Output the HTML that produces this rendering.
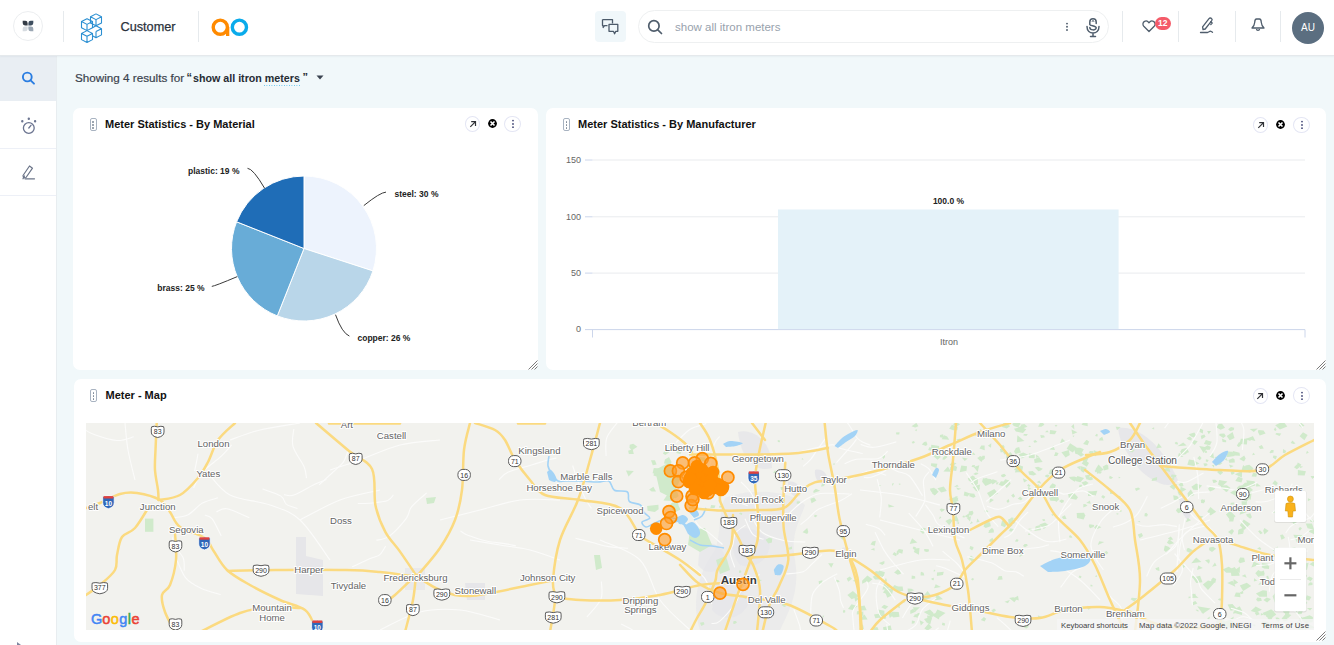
<!DOCTYPE html>
<html><head><meta charset="utf-8">
<style>
*{box-sizing:border-box;margin:0;padding:0}
html,body{width:1334px;height:645px;overflow:hidden;background:#f1f8fa;font-family:"Liberation Sans",sans-serif}
.abs{position:absolute}
#hdr{left:0;top:0;width:1334px;height:55px;background:#fff;z-index:2}
.vd{position:absolute;width:1px;background:#e6eaed}
#side{left:0;top:55px;width:57px;height:590px;background:#fff;border-right:1px solid #e8edf0}
#hline{left:0;top:55px;width:1334px;height:1px;background:#e5e9ec;box-shadow:0 1px 1.5px rgba(40,60,80,0.06);z-index:3}
.card{position:absolute;background:#fff;border-radius:7px}
.ttl{position:absolute;font-weight:700;font-size:11px;color:#111;white-space:nowrap;line-height:13px}
.drag{position:absolute;width:7px;height:13px;border:1.2px solid #a8b3c1;border-radius:2px}
.drag i{position:absolute;left:1.7px;width:1.8px;height:1.8px;background:#7d8896;border-radius:1px}
.btnc{position:absolute;width:16px;height:16px;border:1px solid #e4e6f4;border-radius:50%}
</style></head>
<body>
<!-- HEADER -->
<div id="hdr" class="abs">
  <div class="abs" style="left:13px;top:11px;width:30px;height:30px;border:1.3px solid #eceef0;border-radius:50%"></div>
  <svg class="abs" style="left:22px;top:20px" width="12" height="12" viewBox="0 0 12 12">
    <path d="M0.7 0.7 H3.3 Q5.6 0.7 5.6 3 V5.4 H3 Q0.7 5.4 0.7 3.1 Z" fill="#343b45"/>
    <path d="M11.3 0.7 H8.7 Q6.4 0.7 6.4 3 V5.4 H9 Q11.3 5.4 11.3 3.1 Z" fill="#3f4f60"/>
    <path d="M0.7 11.3 H3.3 Q5.6 11.3 5.6 9 V6.4 H3 Q0.7 6.4 0.7 8.7 Z" fill="#d6dbe0"/>
    <path d="M11.3 11.3 H8.7 Q6.4 11.3 6.4 9 V6.4 H9 Q11.3 6.4 11.3 8.7 Z" fill="#9aa6b3"/>
  </svg>
  <div class="vd" style="left:63px;top:11px;height:31px"></div>
  <svg class="abs" style="left:79px;top:12px" width="25" height="30.5" preserveAspectRatio="none" viewBox="0 0 25 32" fill="none" stroke="#2b8fd2" stroke-width="1.1" stroke-linejoin="round">
    <!-- TR cube -->
    <path d="M17 2 L22.5 5 L22.5 11.5 L17 14.5 L11.5 11.5 L11.5 5 Z M11.5 5 L17 8 L22.5 5 M17 8 L17 14.5"/>
    <!-- L cube -->
    <path d="M8 7 L13.5 10 L13.5 16.5 L8 19.5 L2.5 16.5 L2.5 10 Z M2.5 10 L8 13 L13.5 10 M8 13 L8 19.5"/>
    <!-- BR cube -->
    <path d="M17 14.5 L22.5 17.5 L22.5 24 L17 27 L13.5 25 M17 20.5 L17 27 M13.5 16.5 L17 14.5 M17 20.5 L22.5 17.5"/>
    <!-- BL cube -->
    <path d="M8 19.5 L13.5 22.5 L13.5 29 L8 32 L2.5 29 L2.5 22.5 Z M2.5 22.5 L8 25.5 L13.5 22.5 M8 25.5 L8 31.5"/>
  </svg>
  <div class="abs" style="left:120.5px;top:19px;font-size:12.7px;line-height:16px;color:#2b323c;-webkit-text-stroke:0.25px #2b323c">Customer</div>
  <div class="vd" style="left:198px;top:11px;height:31px"></div>
  <svg class="abs" style="left:210px;top:17px" width="40" height="21" viewBox="0 0 40 21">
    <circle cx="10.3" cy="10.2" r="7.1" fill="none" stroke="#ff8a00" stroke-width="3.4"/>
    <rect x="16" y="10" width="3.3" height="9" fill="#ff8a00"/>
    <circle cx="29.4" cy="10.2" r="7.1" fill="none" stroke="#0aabeb" stroke-width="3.4"/>
  </svg>

  <!-- chat btn -->
  <div class="abs" style="left:595px;top:11px;width:31px;height:31px;background:#f0f7fa;border-radius:4px"></div>
  <svg class="abs" style="left:600px;top:17px" width="20" height="20" viewBox="0 0 20 20" fill="none" stroke="#4c5a6a" stroke-width="1.3" stroke-linejoin="round">
    <path d="M2.5 2.6 H12.5 V6.5 M7.5 8.6 H4.5 L3.2 10.5 V8.6 H2.5 V2.6"/>
    <path d="M9 7.4 H17.8 V14.3 H15.8 L14.6 16.8 L13.4 14.3 H9 Z"/>
  </svg>
  <!-- search pill -->
  <div class="abs" style="left:637.5px;top:9.8px;width:471.5px;height:33.2px;border:1.5px solid #eef0f1;border-radius:17px"></div>
  <svg class="abs" style="left:645px;top:17px" width="20" height="20" viewBox="0 0 20 20" fill="none" stroke="#4f5d6c" stroke-width="1.7">
    <circle cx="8.9" cy="8.9" r="5.2"/><path d="M12.8 12.8 L16.5 16.5" stroke-linecap="round"/>
  </svg>
  <div class="abs" style="left:675px;top:20px;font-size:11.5px;line-height:14px;color:#98a2ad">show all itron meters</div>
  <svg class="abs" style="left:1064px;top:21px" width="6" height="12" viewBox="0 0 6 12" fill="#4f5d6c">
    <circle cx="3" cy="2.6" r="0.95"/><circle cx="3" cy="5.8" r="0.95"/><circle cx="3" cy="9" r="0.95"/>
  </svg>
  <svg class="abs" style="left:1084px;top:16px" width="18" height="22" viewBox="0 0 18 22" fill="none" stroke="#4f5d6c" stroke-width="1.5" stroke-linecap="round">
    <path d="M5.8 8.5 V6 A3.2 3.2 0 0 1 12.2 6 V7.5 M5.8 8.5 C5.8 10 12.2 9.6 12.2 11.8 C12.2 14.6 5.8 14.6 5.8 11.6"/>
    <path d="M8.2 5.5 L9 4.3 L9.8 5.5" stroke-width="1"/>
    <path d="M3 10.5 C3 15 6 17 9 17 C12 17 15 15 15 10.5 M9 17 V20 M6.5 20.5 H11.5"/>
  </svg>
  <div class="vd" style="left:1122px;top:11px;height:31px"></div>
  <!-- heart -->
  <svg class="abs" style="left:1142px;top:19px" width="14" height="14" viewBox="0 0 14 14" fill="none" stroke="#4f5d6c" stroke-width="1.3" stroke-linejoin="round">
    <path d="M7 12.5 L1.8 7.3 C0.4 5.8 0.7 3.2 2.6 2.3 C4.3 1.5 6 2.3 7 3.8 C8 2.3 9.7 1.5 11.4 2.3 C13.3 3.2 13.6 5.8 12.2 7.3 Z"/>
  </svg>
  <div class="abs" style="left:1154.5px;top:17px;width:16.5px;height:13px;background:#f45b69;border-radius:7px;color:#fff;font-size:8.5px;font-weight:700;line-height:13px;text-align:center">12</div>
  <div class="vd" style="left:1178px;top:11px;height:31px"></div>
  <!-- pen -->
  <svg class="abs" style="left:1199px;top:16px" width="17" height="19" viewBox="0 0 17 19" fill="none" stroke="#4f5d6c" stroke-width="1.3" stroke-linejoin="round" stroke-linecap="round">
    <path d="M4 13.5 L3.6 10.8 L10 2.6 C10.7 1.8 11.8 1.8 12.5 2.5 C13.2 3.1 13.2 4.2 12.6 4.9 L6.2 13 Z"/>
    <path d="M11.8 5.7 L13.2 7 L11.8 8.5"/>
    <path d="M1.5 16.5 H8.5 C9.5 16.5 10.5 15.2 11.3 15.2 C12 15.2 12.8 16 13.5 16.3"/>
  </svg>
  <div class="vd" style="left:1235px;top:11px;height:31px"></div>
  <!-- bell -->
  <svg class="abs" style="left:1250px;top:17px" width="16" height="16" viewBox="0 0 16 16" fill="none" stroke="#4f5d6c" stroke-width="1.3" stroke-linejoin="round">
    <path d="M2 11 C3.5 9.5 4.5 8.5 4.7 5.5 C4.8 3 5.2 2 6.5 2 H9.5 C10.8 2 11.2 3 11.3 5.5 C11.5 8.5 12.5 9.5 14 11 Z"/>
    <path d="M6.5 12 C6.5 13.8 9.5 13.8 9.5 12"/>
  </svg>
  <div class="vd" style="left:1280px;top:11px;height:31px"></div>
  <div class="abs" style="left:1292px;top:11.5px;width:32px;height:32px;background:#5b6e80;border-radius:50%;color:#fff;font-size:10px;line-height:31px;text-align:center">AU</div>
</div>

<div id="hline" class="abs"></div>
<!-- SIDEBAR -->
<div id="side" class="abs">
  <div class="abs" style="left:0;top:0;width:56px;height:46px;background:#e9eef3"></div>
  <svg class="abs" style="left:19px;top:68px;top:13px" width="20" height="20" viewBox="0 0 20 20" fill="none" stroke="#2a7de1" stroke-width="1.9" stroke-linecap="round">
    <circle cx="8.3" cy="9" r="4.4"/><path d="M11.6 12.3 L15 15.7"/>
  </svg>
  <div class="abs" style="left:0;top:93px;width:56px;height:1px;background:#edf0f7"></div>
  <div class="abs" style="left:0;top:140px;width:56px;height:1px;background:#edf0f7"></div>
  <svg class="abs" style="left:19px;top:62px" width="20" height="20" viewBox="0 0 20 20" fill="none" stroke="#6b7490" stroke-width="1.3" stroke-linecap="round">
    <circle cx="9.8" cy="11" r="5.4"/><path d="M9.8 11 L12 8.3"/>
    <circle cx="3.3" cy="4.3" r="0.55" fill="#6b7490"/><circle cx="9.8" cy="1.8" r="0.55" fill="#6b7490"/><circle cx="16.1" cy="4.3" r="0.55" fill="#6b7490"/>
  </svg>
  <svg class="abs" style="left:19px;top:108px" width="20" height="20" viewBox="0 0 20 20" fill="none" stroke="#6b7488" stroke-width="1.2" stroke-linejoin="round" stroke-linecap="round">
    <path d="M4 12.5 L10.5 3 L13.5 5.2 L7 14.5 L4.5 15 Z M5.5 13 L4 15.8"/>
    <path d="M6 15.8 H15.5"/>
  </svg>
</div>

<!-- RESULT LINE -->
<div class="abs" style="left:75px;top:71px;font-size:11.7px;line-height:13px;color:#3b434d;white-space:nowrap;-webkit-text-stroke:0.2px #3b434d">Showing 4 results for</div>
<div class="abs" style="left:186.5px;top:71px;font-size:11px;line-height:13px;color:#262c33;font-weight:700">“</div>
<div class="abs" style="left:193px;top:71.5px;font-size:10.7px;line-height:13px;color:#262c33;font-weight:700;white-space:nowrap">show all itron meters</div>
<div class="abs" style="left:264px;top:84.5px;width:37px;height:1.5px;background-image:linear-gradient(90deg,#62c4ee 50%,transparent 50%);background-size:2.5px 1.5px"></div>
<div class="abs" style="left:302.5px;top:71px;font-size:11px;line-height:13px;color:#262c33;font-weight:700">”</div>
<svg class="abs" style="left:316px;top:75px" width="8" height="5" viewBox="0 0 8 5"><path d="M0.5 0.5 H7.5 L4 4.5Z" fill="#3b4350"/></svg>

<!-- CARD 1 -->
<div class="card" style="left:73px;top:108px;width:465px;height:262px"></div>
<!-- CARD 2 -->
<div class="card" style="left:546px;top:108px;width:780px;height:262px"></div>
<!-- CARD 3 -->
<div class="card" style="left:73.7px;top:379px;width:1252.3px;height:262.5px"></div>


<!-- CARD1 CONTENT -->
<div class="drag" style="left:89.5px;top:118px"><i style="top:2.2px"></i><i style="top:5.2px"></i><i style="top:8.2px"></i></div>
<div class="ttl" style="left:105px;top:117.7px">Meter Statistics - By Material</div>

<div class="btnc" style="left:464.8px;top:115.9px;width:15.6px;height:16px"></div>
<svg class="abs" style="left:467.6px;top:118.9px" width="10" height="10" viewBox="0 0 10 10" fill="none" stroke="#2f3136" stroke-width="1.2"><path d="M2.3 7.8 L7.5 2.6 M3.2 2.6 H7.5 V6.9"/></svg>
<svg class="abs" style="left:488.2px;top:118.9px" width="9" height="9" viewBox="0 0 9 9"><circle cx="4.5" cy="4.5" r="4.4" fill="#000"/><path d="M2.5 2.5 L6.5 6.5 M6.5 2.5 L2.5 6.5" stroke="#fff" stroke-width="1.6"/></svg>
<div class="btnc" style="left:504.4px;top:115.7px;width:17px;height:16.5px"></div>
<svg class="abs" style="left:511.2px;top:117.9px" width="4" height="12" viewBox="0 0 4 12" fill="#454a78"><circle cx="2" cy="2.6" r="0.9"/><circle cx="2" cy="6" r="0.9"/><circle cx="2" cy="9.2" r="0.9"/></svg>
<svg class="abs" style="left:0;top:0" width="540" height="372" viewBox="0 0 540 372">
<path d="M304 248.5 L304.00 176.00 A72.5 72.5 0 0 1 372.95 270.90 Z" fill="#edf3fd" stroke="#fff" stroke-width="1"/>
<path d="M304 248.5 L372.95 270.90 A72.5 72.5 0 0 1 277.31 315.91 Z" fill="#b9d6e9" stroke="#fff" stroke-width="1"/>
<path d="M304 248.5 L277.31 315.91 A72.5 72.5 0 0 1 236.59 221.81 Z" fill="#68acd7" stroke="#fff" stroke-width="1"/>
<path d="M304 248.5 L236.59 221.81 A72.5 72.5 0 0 1 304.00 176.00 Z" fill="#1f6db7" stroke="#fff" stroke-width="1"/>
<g fill="none" stroke="#3a3a3a" stroke-width="1">
<path d="M247.5 168.3 Q253 168.5 264.7 188.4"/>
<path d="M386 192.1 Q380 192.5 363.8 205.6"/>
<path d="M211.8 286.4 Q215 286 237.3 276.6"/>
<path d="M335.5 314.7 Q342 333 349.4 336.1"/>
</g>
<g font-family="Liberation Sans" font-weight="700" font-size="8.5" fill="#222">
<text x="188" y="173.7">plastic: 19 %</text>
<text x="394.5" y="196.5">steel: 30 %</text>
<text x="157.3" y="290.9">brass: 25 %</text>
<text x="357.5" y="340.6">copper: 26 %</text>
</g>
</svg>
<svg class="abs" style="left:528px;top:360px" width="10" height="10" viewBox="0 0 10 10" stroke="#7a7a7a" stroke-width="1" stroke-linecap="round"><path d="M0.8 9.2 L9.2 0.8 M3.8 9.2 L9.2 3.8 M6.8 9.2 L9.2 6.8"/></svg>

<!-- CARD2 CONTENT -->
<div class="drag" style="left:563px;top:118.3px"><i style="top:2.2px"></i><i style="top:5.2px"></i><i style="top:8.2px"></i></div>
<div class="ttl" style="left:578px;top:118.2px">Meter Statistics - By Manufacturer</div>

<div class="btnc" style="left:1252.8px;top:116.8px;width:15.6px;height:16px"></div>
<svg class="abs" style="left:1255.6px;top:119.8px" width="10" height="10" viewBox="0 0 10 10" fill="none" stroke="#2f3136" stroke-width="1.2"><path d="M2.3 7.8 L7.5 2.6 M3.2 2.6 H7.5 V6.9"/></svg>
<svg class="abs" style="left:1276.2px;top:119.8px" width="9" height="9" viewBox="0 0 9 9"><circle cx="4.5" cy="4.5" r="4.4" fill="#000"/><path d="M2.5 2.5 L6.5 6.5 M6.5 2.5 L2.5 6.5" stroke="#fff" stroke-width="1.6"/></svg>
<div class="btnc" style="left:1293.2px;top:116.6px;width:17px;height:16.5px"></div>
<svg class="abs" style="left:1300.0px;top:118.8px" width="4" height="12" viewBox="0 0 4 12" fill="#454a78"><circle cx="2" cy="2.6" r="0.9"/><circle cx="2" cy="6" r="0.9"/><circle cx="2" cy="9.2" r="0.9"/></svg>
<svg class="abs" style="left:546px;top:108px" width="780" height="262" viewBox="546 108 780 262">
<g stroke="#e9ebee" stroke-width="1">
<path d="M592.5 160 H1305 M592.5 216.8 H1305 M592.5 273.1 H1305"/>
</g>
<g stroke="#ccd6eb" stroke-width="1">
<path d="M585 160 H592.5 M585 216.8 H592.5 M585 273.1 H592.5 M585 329.6 H1305 M592.5 329.6 V337.5 M1305 329.6 V337.5"/>
</g>
<rect x="778" y="209.5" width="340.6" height="119.6" fill="#e4f2f9"/>
<g font-family="Liberation Sans" font-size="9" fill="#666" text-anchor="end">
<text x="581" y="163">150</text>
<text x="581" y="219.6">100</text>
<text x="581" y="276">50</text>
<text x="581" y="332.4">0</text>
</g>
<text x="948.5" y="203.7" font-family="Liberation Sans" font-size="8.5" font-weight="700" fill="#222" text-anchor="middle">100.0 %</text>
<text x="949" y="344.8" font-family="Liberation Sans" font-size="9" fill="#666" text-anchor="middle">Itron</text>
</svg>
<svg class="abs" style="left:1316px;top:360px" width="10" height="10" viewBox="0 0 10 10" stroke="#7a7a7a" stroke-width="1" stroke-linecap="round"><path d="M0.8 9.2 L9.2 0.8 M3.8 9.2 L9.2 3.8 M6.8 9.2 L9.2 6.8"/></svg>

<!-- CARD3 CONTENT -->
<div class="drag" style="left:90px;top:388.6px"><i style="top:2.2px"></i><i style="top:5.2px"></i><i style="top:8.2px"></i></div>
<div class="ttl" style="left:105.5px;top:388.8px">Meter - Map</div>

<div class="btnc" style="left:1252.6px;top:387.6px;width:15.6px;height:16px"></div>
<svg class="abs" style="left:1255.4px;top:390.6px" width="10" height="10" viewBox="0 0 10 10" fill="none" stroke="#2f3136" stroke-width="1.2"><path d="M2.3 7.8 L7.5 2.6 M3.2 2.6 H7.5 V6.9"/></svg>
<svg class="abs" style="left:1276.0px;top:390.6px" width="9" height="9" viewBox="0 0 9 9"><circle cx="4.5" cy="4.5" r="4.4" fill="#000"/><path d="M2.5 2.5 L6.5 6.5 M6.5 2.5 L2.5 6.5" stroke="#fff" stroke-width="1.6"/></svg>
<div class="btnc" style="left:1293.0px;top:387.4px;width:17px;height:16.5px"></div>
<svg class="abs" style="left:1299.8px;top:389.6px" width="4" height="12" viewBox="0 0 4 12" fill="#454a78"><circle cx="2" cy="2.6" r="0.9"/><circle cx="2" cy="6" r="0.9"/><circle cx="2" cy="9.2" r="0.9"/></svg>
<svg class="abs" style="left:1316px;top:631px" width="10" height="10" viewBox="0 0 10 10" stroke="#7a7a7a" stroke-width="1" stroke-linecap="round"><path d="M0.8 9.2 L9.2 0.8 M3.8 9.2 L9.2 3.8 M6.8 9.2 L9.2 6.8"/></svg>
<div id="map" class="abs" style="left:86px;top:423px;width:1228px;height:207px;background:#f2f2ee;overflow:hidden">
<svg class="abs" style="left:0;top:0" width="1228" height="207" viewBox="86 423 1228 207">
<style>.lb{font-family:"Liberation Sans";font-size:9.6px;fill:#646464;text-anchor:middle;paint-order:stroke;stroke:#fff;stroke-width:2px;stroke-linejoin:round}.sh{font-family:"Liberation Sans";font-size:7px;fill:#333;text-anchor:middle}.shi{font-family:"Liberation Sans";font-size:6.5px;fill:#fff;text-anchor:middle;font-weight:700}</style>
<rect x="86" y="423" width="1228" height="207" fill="#f2f2ee"/>
<g fill="#e6e6e9">
<path d="M296 537 L306 537 L306 556 L323 560 L323 596 L296 594 Z"/>
<path d="M725 498 C750 488 790 490 805 505 C800 520 790 535 795 560 C800 590 790 610 780 630 L700 630 C690 600 700 570 715 550 C722 530 718 512 725 498Z" opacity="0.6"/>
<path d="M735 530 C745 525 765 530 770 545 C768 560 755 570 740 565 C732 555 730 540 735 530Z" opacity="0.7"/>
<path d="M715 585 C728 580 745 588 748 605 C740 620 722 622 712 610Z" opacity="0.7"/>
<path d="M700 545 C710 540 725 545 725 560 C720 575 705 575 698 565Z" opacity="0.7"/>
<path d="M738 432 C750 428 772 438 772 468 C760 472 742 465 738 432Z" opacity="0.85"/>
<path d="M788 482 C795 480 802 486 800 496 C794 498 788 494 788 482Z"/>
<path d="M1118 428 C1135 425 1160 440 1178 480 C1170 492 1150 480 1140 470 C1128 455 1120 445 1118 428Z" opacity="0.9"/>
<path d="M1180 495 C1190 497 1195 510 1188 520 C1182 515 1178 505 1180 495Z"/>
<path d="M465 583 L485 583 L485 600 L467 600Z"/>
<path d="M405 568 L425 568 L425 590 L405 590Z" opacity="0.7"/>
<path d="M815 470 C822 468 830 474 826 484 C818 484 814 478 815 470Z"/>
<path d="M842 548 C850 546 856 552 854 560 C846 561 842 556 842 548Z"/>
</g>
<g fill="#d0eacb">
<path d="M145.0 518.6 L153.4 518.6 L153.4 531.8 L145.0 531.8 Z"/>
<path d="M426.0 498.0 L436.0 497.0 L434.0 503.0 L427.0 504.0 Z"/>
<path d="M594.0 555.0 L600.0 555.0 L602.0 568.0 L596.0 570.0 Z"/>
<path d="M655.0 470.0 L670.0 462.0 L680.0 480.0 L672.0 498.0 L660.0 492.0 Z"/>
<path d="M690.0 530.0 L705.0 528.0 L712.0 545.0 L700.0 552.0 L688.0 545.0 Z"/>
<path d="M716.0 560.0 L726.0 556.0 L730.0 570.0 L720.0 574.0 Z"/>
<path d="M1002.9 483.0 L1005.1 479.2 L1009.5 480.5 L1010.6 483.7 L1006.6 487.9 Z"/>
<path d="M1036.6 485.0 L1038.7 484.2 L1040.4 486.7 L1038.3 488.4 L1034.9 487.5 Z"/>
<path d="M1077.5 477.5 L1074.7 481.7 L1070.4 479.1 L1069.0 476.9 L1074.2 476.5 Z"/>
<path d="M1023.1 435.3 L1024.1 433.9 L1027.8 433.9 L1026.4 436.1 Z"/>
<path d="M941.2 492.6 L937.3 488.2 L943.7 486.4 L946.8 490.9 Z"/>
<path d="M1015.1 496.2 L1013.2 497.8 L1011.2 495.6 L1013.4 493.4 Z"/>
<path d="M1028.8 530.4 L1028.6 528.6 L1031.8 528.8 L1031.5 531.0 Z"/>
<path d="M982.7 430.8 L980.8 432.7 L978.8 430.4 L980.4 429.0 Z"/>
<path d="M984.7 450.3 L979.5 448.6 L981.3 445.6 L984.6 445.6 Z"/>
<path d="M1015.7 453.9 L1014.0 451.5 L1015.9 448.0 L1019.1 447.0 L1020.9 452.5 Z"/>
<path d="M979.6 521.8 L976.4 522.6 L977.4 518.5 Z"/>
<path d="M944.2 435.2 L947.2 436.4 L949.2 439.8 L941.6 439.3 Z"/>
<path d="M931.8 492.4 L930.0 489.6 L936.4 488.7 L937.1 492.9 Z"/>
<path d="M1088.7 457.6 L1085.5 464.2 L1081.9 459.6 Z"/>
<path d="M1031.4 488.7 L1028.1 490.0 L1028.1 486.7 Z"/>
<path d="M1072.4 434.4 L1071.5 429.5 L1077.4 432.3 Z"/>
<path d="M1011.1 517.4 L1016.1 518.6 L1014.6 521.7 L1009.8 520.5 Z"/>
<path d="M967.0 466.2 L966.5 470.8 L959.7 472.2 L961.3 465.4 Z"/>
<path d="M1088.6 452.2 L1090.1 451.0 L1093.7 451.2 L1093.5 454.0 L1091.5 455.0 Z"/>
<path d="M972.5 486.9 L977.5 485.5 L979.9 488.9 L975.1 490.1 Z"/>
<path d="M957.3 430.3 L953.2 430.2 L949.2 428.7 L951.9 424.7 L957.8 426.8 Z"/>
<path d="M931.0 449.2 L931.3 444.7 L939.1 445.9 L939.3 450.2 Z"/>
<path d="M1081.7 463.6 L1084.5 459.6 L1089.0 462.9 L1086.8 466.8 Z"/>
<path d="M1096.1 529.5 L1094.1 527.4 L1096.5 524.8 L1101.4 527.2 Z"/>
<path d="M969.4 518.4 L964.6 516.3 L969.2 513.3 Z"/>
<path d="M1068.1 493.9 L1073.5 492.6 L1078.0 497.3 L1076.2 499.8 L1068.9 498.2 Z"/>
<path d="M1043.9 529.1 L1039.4 524.6 L1045.1 522.4 L1048.5 525.0 Z"/>
<path d="M1018.0 427.4 L1023.7 424.4 L1022.9 432.7 Z"/>
<path d="M978.6 473.0 L977.1 474.5 L975.4 474.9 L973.2 474.0 L975.9 472.4 Z"/>
<path d="M956.5 426.5 L952.9 424.2 L956.6 421.7 L960.0 424.6 Z"/>
<path d="M929.8 488.8 L934.0 487.7 L938.7 491.8 L934.3 495.5 Z"/>
<path d="M1038.5 458.3 L1038.2 461.1 L1035.0 460.7 L1034.8 459.2 Z"/>
<path d="M1004.8 527.2 L1000.8 525.5 L1002.1 520.4 L1007.8 522.3 Z"/>
<path d="M1039.0 457.0 L1042.7 462.1 L1034.7 463.0 L1034.0 459.5 Z"/>
<path d="M956.2 439.4 L960.6 438.6 L959.6 442.0 Z"/>
<path d="M991.3 443.2 L991.0 447.7 L987.9 445.8 Z"/>
<path d="M1012.1 423.9 L1017.1 420.1 L1020.5 423.6 L1018.3 427.5 L1013.8 426.0 Z"/>
<path d="M986.1 477.8 L988.4 479.5 L987.2 482.1 L984.1 482.9 L983.8 479.7 Z"/>
<path d="M1088.1 493.3 L1092.2 492.0 L1094.1 494.2 L1090.8 495.9 L1088.0 496.1 Z"/>
<path d="M972.2 465.3 L974.9 464.9 L974.7 467.2 L971.6 467.1 Z"/>
<path d="M943.4 471.6 L947.9 466.6 L951.0 471.8 Z"/>
<path d="M1000.9 475.0 L1004.2 473.8 L1006.2 475.4 L1003.9 477.3 L1001.7 477.1 Z"/>
<path d="M955.1 500.6 L958.8 504.4 L955.7 506.1 L952.4 503.8 Z"/>
<path d="M972.7 482.2 L969.0 481.1 L967.8 478.4 L972.6 475.5 L975.1 476.9 Z"/>
<path d="M950.0 469.9 L950.4 467.3 L953.0 464.6 L957.1 467.0 L956.2 470.9 Z"/>
<path d="M975.0 485.9 L980.1 484.6 L978.8 492.2 L975.3 490.4 Z"/>
<path d="M977.7 472.0 L973.7 466.9 L979.3 465.2 Z"/>
<path d="M1012.8 459.2 L1015.2 459.1 L1014.2 463.3 L1011.3 463.0 L1008.7 460.6 Z"/>
<path d="M989.9 497.5 L987.0 492.9 L994.3 489.1 L998.1 493.4 Z"/>
<path d="M1001.8 486.1 L998.5 484.7 L1001.0 481.2 L1008.1 481.9 L1006.6 485.0 Z"/>
<path d="M989.5 503.1 L989.9 498.0 L993.9 500.1 Z"/>
<path d="M1100.0 473.1 L1097.0 473.8 L1096.5 470.3 L1099.7 470.3 Z"/>
<path d="M957.1 484.7 L958.8 486.6 L954.0 487.1 Z"/>
<path d="M1089.9 491.4 L1097.4 490.8 L1095.6 495.7 Z"/>
<path d="M935.1 494.9 L932.0 493.6 L933.1 491.8 L936.4 491.8 L936.6 493.4 Z"/>
<path d="M1054.4 495.5 L1056.1 496.5 L1056.4 501.1 L1050.4 500.8 L1049.3 498.1 Z"/>
<path d="M950.2 518.4 L952.5 520.8 L949.2 525.2 L945.4 520.9 Z"/>
<path d="M985.0 434.5 L985.1 438.6 L980.0 437.0 L979.8 432.6 Z"/>
<path d="M1033.6 475.4 L1029.3 474.7 L1028.3 471.6 L1032.6 471.1 L1036.5 474.3 Z"/>
<path d="M990.6 478.9 L994.2 482.0 L985.5 486.0 L982.1 481.7 L983.0 478.3 Z"/>
<path d="M1084.0 512.7 L1085.3 515.6 L1083.6 519.5 L1077.0 517.9 L1076.7 513.1 Z"/>
<path d="M978.1 480.8 L974.9 481.5 L972.6 480.6 L974.6 478.4 Z"/>
<path d="M1012.7 524.9 L1008.5 528.8 L1007.0 525.1 L1009.9 522.2 Z"/>
<path d="M1093.7 526.9 L1090.0 528.2 L1088.8 526.1 L1089.4 524.2 L1094.2 525.0 Z"/>
<path d="M1041.3 426.8 L1038.2 426.7 L1040.0 422.5 L1042.8 422.6 L1044.4 424.7 Z"/>
<path d="M981.4 462.0 L976.9 457.7 L984.0 457.9 Z"/>
<path d="M984.3 510.6 L987.2 510.3 L988.4 512.1 L985.1 512.2 Z"/>
<path d="M932.3 531.0 L933.6 527.1 L939.2 528.0 Z"/>
<path d="M1008.1 519.6 L1013.1 517.4 L1015.4 521.9 L1013.7 524.0 L1008.6 523.4 Z"/>
<path d="M961.8 457.5 L967.8 458.5 L964.7 460.9 Z"/>
<path d="M948.3 499.1 L956.5 496.8 L958.6 500.9 L953.0 502.2 Z"/>
<path d="M1083.8 449.3 L1080.5 455.1 L1075.3 453.7 L1073.8 447.8 L1080.3 447.7 Z"/>
<path d="M950.8 514.0 L948.1 512.0 L950.1 509.8 L954.4 510.3 Z"/>
<path d="M1087.4 491.4 L1090.1 491.3 L1092.6 492.8 L1091.1 495.3 L1088.0 494.5 Z"/>
<path d="M971.6 521.2 L972.9 523.1 L969.7 524.2 Z"/>
<path d="M1081.4 482.5 L1085.8 481.0 L1088.6 483.0 L1084.5 486.0 Z"/>
<path d="M1023.1 466.4 L1021.9 472.2 L1014.9 472.4 L1017.5 464.5 Z"/>
<path d="M973.5 513.0 L972.0 515.5 L968.8 515.1 L968.9 511.4 L972.6 510.8 Z"/>
<path d="M992.6 484.6 L990.0 481.1 L992.8 479.2 L997.6 480.9 Z"/>
<path d="M931.5 451.0 L928.1 449.9 L929.3 447.3 L932.3 447.8 Z"/>
<path d="M984.9 455.7 L984.7 458.5 L983.3 460.0 L981.8 457.5 L982.4 455.7 Z"/>
<path d="M1022.9 478.2 L1027.4 480.5 L1024.0 482.6 Z"/>
<path d="M990.7 526.2 L985.7 528.1 L983.5 526.5 L985.3 521.3 L990.2 522.4 Z"/>
<path d="M1081.7 484.7 L1082.8 487.5 L1078.9 487.1 L1079.7 484.7 Z"/>
<path d="M1081.5 424.7 L1084.0 421.3 L1087.6 421.3 L1087.7 426.2 Z"/>
<path d="M958.3 519.8 L958.5 522.1 L952.3 519.9 L953.4 517.8 L956.4 515.3 Z"/>
<path d="M1035.7 526.3 L1040.4 524.9 L1040.9 529.9 L1034.4 531.1 Z"/>
<path d="M975.2 486.2 L970.4 483.3 L973.1 478.0 L977.7 478.3 L978.0 483.5 Z"/>
<path d="M1054.7 513.8 L1052.7 516.0 L1051.2 514.4 Z"/>
<path d="M937.6 453.2 L940.8 456.9 L937.6 459.8 L933.1 455.9 Z"/>
<path d="M1207.5 445.2 L1210.9 447.1 L1209.5 450.0 L1202.9 448.3 Z"/>
<path d="M1177.9 456.6 L1179.0 452.8 L1183.3 456.9 Z"/>
<path d="M1222.6 442.0 L1221.9 438.5 L1226.2 440.4 L1226.1 442.3 Z"/>
<path d="M1235.3 481.0 L1238.2 476.4 L1242.7 478.6 L1241.5 482.5 Z"/>
<path d="M1189.9 436.6 L1191.9 438.4 L1191.3 440.5 L1188.8 439.9 L1186.5 438.2 Z"/>
<path d="M1214.2 461.5 L1216.6 460.5 L1222.4 462.9 L1219.9 465.0 L1214.5 464.4 Z"/>
<path d="M1237.7 489.7 L1236.8 488.1 L1239.0 485.8 L1242.5 485.6 L1242.6 488.5 Z"/>
<path d="M1204.7 466.5 L1203.3 463.4 L1206.4 463.2 L1207.8 465.1 Z"/>
<path d="M1202.8 433.6 L1199.7 432.0 L1199.7 428.3 L1203.2 430.0 Z"/>
<path d="M1233.7 466.0 L1230.4 467.7 L1229.0 464.5 Z"/>
<path d="M1181.7 449.9 L1185.9 450.4 L1186.5 453.9 L1182.4 455.1 L1180.2 451.5 Z"/>
<path d="M1205.9 440.1 L1211.8 441.7 L1210.0 445.3 L1203.9 444.0 Z"/>
<path d="M1210.6 448.2 L1206.3 450.3 L1208.2 445.7 Z"/>
<path d="M1199.2 445.9 L1207.8 447.4 L1203.6 453.0 Z"/>
<path d="M1202.1 485.5 L1198.1 489.9 L1193.4 489.7 L1191.4 486.8 L1196.2 483.6 Z"/>
<path d="M1199.4 463.4 L1193.5 466.0 L1187.3 464.8 L1189.0 459.6 L1193.7 460.2 Z"/>
<path d="M1181.1 482.5 L1182.7 483.2 L1183.5 486.1 L1180.9 486.8 L1178.5 484.8 Z"/>
<path d="M1197.7 441.2 L1194.7 445.1 L1191.7 442.6 L1193.5 439.9 Z"/>
<path d="M1222.0 423.7 L1225.1 427.7 L1220.6 429.7 L1216.6 427.5 L1218.6 423.9 Z"/>
<path d="M1221.0 485.5 L1226.9 485.2 L1230.6 488.0 L1226.7 491.9 L1221.0 487.9 Z"/>
<path d="M1219.2 480.0 L1227.4 481.5 L1221.6 486.7 L1218.0 484.6 Z"/>
<path d="M1177.4 446.2 L1183.2 442.4 L1186.7 445.4 Z"/>
<path d="M1233.3 471.3 L1234.9 472.9 L1232.8 474.6 L1231.3 474.4 L1230.6 471.8 Z"/>
<path d="M1208.8 434.3 L1207.1 431.1 L1211.1 431.0 Z"/>
<path d="M1214.2 465.0 L1214.0 467.8 L1211.7 465.0 Z"/>
<path d="M1228.5 459.9 L1232.9 458.2 L1234.5 459.2 L1234.8 462.5 L1229.2 462.8 Z"/>
<path d="M1180.7 486.8 L1186.4 489.3 L1179.5 493.4 Z"/>
<path d="M1186.8 447.7 L1189.0 452.3 L1180.7 454.4 L1181.5 449.3 Z"/>
<path d="M1239.5 452.8 L1240.0 455.8 L1233.2 455.5 L1232.9 450.9 Z"/>
<path d="M1219.2 456.5 L1218.3 460.3 L1214.3 457.0 Z"/>
<path d="M904.9 602.4 L901.6 602.0 L903.9 599.8 Z"/>
<path d="M939.3 612.3 L939.1 619.6 L930.4 614.5 Z"/>
<path d="M877.8 573.6 L881.6 579.6 L875.1 579.6 L872.7 576.7 Z"/>
<path d="M915.0 621.3 L914.4 623.3 L911.7 623.7 L911.9 620.6 Z"/>
<path d="M911.6 578.9 L911.8 575.4 L915.1 576.2 L915.3 578.5 Z"/>
<path d="M885.2 585.6 L888.6 589.0 L885.5 590.1 L883.2 587.6 Z"/>
<path d="M881.5 613.2 L880.5 617.4 L875.4 618.2 L874.0 614.5 Z"/>
<path d="M892.5 587.3 L894.6 584.9 L902.3 588.9 L898.2 591.8 Z"/>
<path d="M864.5 614.5 L867.6 619.6 L858.5 620.1 Z"/>
<path d="M929.0 551.2 L926.9 552.0 L924.3 551.2 L924.2 548.9 L928.7 549.3 Z"/>
<path d="M943.7 571.7 L943.0 575.1 L936.9 576.0 L937.0 572.5 Z"/>
<path d="M882.3 565.0 L878.8 562.9 L884.4 561.0 L884.4 563.5 Z"/>
<path d="M876.3 574.8 L879.5 570.4 L884.9 572.2 L883.4 577.3 Z"/>
<path d="M883.5 619.5 L880.0 618.3 L880.6 614.5 L884.4 613.6 L886.3 617.7 Z"/>
<path d="M909.7 544.1 L912.1 538.2 L917.4 542.5 Z"/>
<path d="M924.2 595.0 L927.6 591.1 L930.9 595.6 Z"/>
<path d="M934.7 614.5 L937.4 609.4 L945.5 612.9 L938.0 618.4 Z"/>
<path d="M895.3 613.4 L889.8 617.9 L887.9 611.5 Z"/>
<path d="M877.8 574.2 L875.1 575.0 L873.8 572.8 L876.1 570.9 L879.1 571.8 Z"/>
<path d="M896.8 554.0 L896.1 556.3 L892.5 554.6 L894.3 551.9 Z"/>
<path d="M898.9 548.9 L903.1 549.7 L902.3 553.8 L896.6 551.7 Z"/>
<path d="M874.3 548.1 L874.7 550.6 L870.6 549.5 Z"/>
<path d="M918.9 554.7 L913.8 551.9 L915.3 548.6 L919.5 548.1 Z"/>
<path d="M934.8 600.2 L936.6 593.7 L943.0 599.2 Z"/>
<path d="M871.9 627.8 L877.4 626.9 L878.9 630.9 L875.2 632.1 Z"/>
<path d="M901.0 573.8 L897.7 574.7 L894.1 572.4 L897.9 569.2 L900.0 570.4 Z"/>
<path d="M934.1 588.2 L935.7 584.2 L940.9 587.0 Z"/>
<path d="M914.5 617.5 L914.7 614.3 L917.5 614.9 Z"/>
<path d="M879.0 613.7 L878.1 609.6 L884.4 610.8 L884.4 613.9 Z"/>
<path d="M925.0 598.5 L922.3 599.5 L921.0 599.2 L922.1 596.2 L923.6 595.9 Z"/>
<path d="M1058.8 566.0 L1051.5 564.6 L1058.6 561.0 Z"/>
<path d="M1071.0 607.6 L1066.2 611.3 L1064.9 607.0 Z"/>
<path d="M1156.2 448.2 L1158.5 443.3 L1161.9 447.5 Z"/>
<path d="M1059.1 500.9 L1061.5 499.5 L1063.8 500.3 L1063.6 502.3 L1061.4 502.9 Z"/>
<path d="M1022.9 545.9 L1024.6 544.0 L1027.0 544.1 L1027.8 545.4 L1025.0 547.2 Z"/>
<path d="M1049.6 433.9 L1050.1 430.0 L1056.6 431.0 L1054.9 434.3 Z"/>
<path d="M970.9 579.3 L972.6 578.0 L974.1 578.9 L972.8 580.4 Z"/>
<path d="M1029.2 486.9 L1027.1 485.7 L1028.4 484.1 L1030.7 485.8 Z"/>
<path d="M1173.2 495.3 L1177.2 495.9 L1180.2 499.8 L1173.8 500.1 Z"/>
<path d="M1118.9 478.4 L1118.5 476.7 L1120.6 477.3 Z"/>
<path d="M1139.5 538.3 L1137.8 534.4 L1141.7 533.0 L1143.0 536.0 Z"/>
<path d="M1157.0 480.3 L1151.6 481.0 L1152.3 478.5 L1157.1 476.9 Z"/>
<path d="M958.0 499.6 L956.7 500.8 L955.1 497.8 L958.2 497.5 Z"/>
<path d="M1103.5 440.4 L1099.0 440.6 L1099.5 438.6 L1102.2 436.8 Z"/>
<path d="M885.5 619.1 L878.6 617.7 L886.0 614.8 Z"/>
<path d="M1278.0 597.7 L1285.2 599.6 L1280.8 603.0 Z"/>
<path d="M1214.0 458.6 L1209.7 456.8 L1213.2 452.7 Z"/>
<path d="M1104.3 542.1 L1097.8 544.9 L1099.2 541.2 Z"/>
<path d="M1027.5 426.7 L1023.1 428.3 L1020.3 424.8 L1024.5 424.1 Z"/>
<path d="M964.4 517.8 L962.2 516.9 L963.5 515.6 L964.9 515.9 Z"/>
<path d="M1096.6 575.1 L1097.1 577.0 L1094.9 576.6 Z"/>
<path d="M1311.0 499.6 L1307.9 501.3 L1307.9 498.3 Z"/>
<path d="M1036.7 482.3 L1039.4 480.6 L1041.4 483.8 Z"/>
<path d="M937.4 463.7 L936.3 467.9 L931.0 465.7 L931.2 463.3 Z"/>
<path d="M1258.2 575.6 L1257.4 572.9 L1263.8 570.4 L1264.5 573.2 L1264.2 575.8 Z"/>
<path d="M992.0 527.7 L993.8 529.9 L993.8 532.5 L988.3 533.1 L989.3 530.3 Z"/>
<path d="M1015.1 541.4 L1015.3 540.7 L1016.7 539.0 L1018.6 540.1 L1017.6 541.7 Z"/>
<path d="M894.5 506.4 L888.6 507.4 L888.2 504.3 Z"/>
<path d="M942.5 622.6 L945.1 623.4 L944.6 625.8 L941.9 624.9 Z"/>
<path d="M980.8 619.9 L983.9 617.0 L986.2 618.8 L984.6 621.6 Z"/>
<path d="M1019.1 557.0 L1020.6 553.0 L1022.7 555.2 Z"/>
<path d="M1093.3 479.2 L1091.1 480.2 L1088.3 480.0 L1088.6 477.7 L1091.3 476.6 Z"/>
<path d="M1045.0 432.3 L1047.1 430.3 L1048.8 432.3 Z"/>
<path d="M1092.8 492.9 L1094.5 493.7 L1094.4 495.2 L1092.1 494.5 Z"/>
<path d="M1263.8 448.6 L1260.2 449.1 L1258.7 446.5 L1261.8 444.9 Z"/>
<path d="M1255.6 625.3 L1254.9 626.4 L1252.2 625.0 L1254.3 624.2 Z"/>
<path d="M1194.4 432.6 L1196.3 435.9 L1193.9 437.4 L1191.1 436.5 L1188.7 434.3 Z"/>
<path d="M968.9 558.4 L971.0 555.6 L975.5 559.1 L971.7 561.5 Z"/>
<path d="M1277.9 483.1 L1276.2 485.8 L1272.3 483.6 L1274.9 480.2 Z"/>
<path d="M1081.5 576.4 L1080.8 578.2 L1078.5 577.2 L1079.7 575.4 Z"/>
<path d="M1108.2 465.5 L1108.5 469.3 L1103.9 470.6 L1102.8 466.4 L1106.5 464.6 Z"/>
<path d="M1056.1 424.7 L1057.5 425.7 L1055.9 426.7 L1054.7 425.6 Z"/>
<path d="M1159.4 569.4 L1159.4 571.0 L1156.4 570.0 L1155.3 568.3 L1158.9 566.9 Z"/>
<path d="M1090.8 584.5 L1092.5 585.2 L1092.4 586.4 L1090.3 586.2 Z"/>
<path d="M1044.5 519.0 L1045.2 520.7 L1043.2 520.9 L1042.0 519.4 Z"/>
<path d="M1095.2 509.9 L1093.9 508.0 L1095.9 506.3 L1098.3 507.8 Z"/>
<path d="M1052.6 483.3 L1055.9 485.1 L1055.0 488.1 L1049.5 487.9 L1050.0 486.1 Z"/>
<path d="M969.5 548.6 L970.2 546.1 L973.5 546.9 L973.3 548.6 L972.1 550.6 Z"/>
<path d="M984.0 551.2 L983.5 550.1 L984.3 549.1 L986.3 549.5 L986.2 551.3 Z"/>
<path d="M1020.2 496.6 L1022.6 498.7 L1020.9 500.2 L1017.7 498.8 Z"/>
<path d="M989.7 542.0 L989.4 540.1 L992.4 537.8 L993.6 539.9 L994.1 541.2 Z"/>
<path d="M1116.8 514.5 L1116.2 513.5 L1118.4 513.2 L1118.3 514.4 Z"/>
<path d="M1028.1 535.0 L1028.4 533.2 L1030.0 533.8 L1030.4 534.9 Z"/>
<path d="M1151.7 428.5 L1154.1 427.3 L1154.2 429.5 Z"/>
<path d="M1182.1 491.4 L1182.9 495.4 L1179.1 495.3 L1177.4 491.4 Z"/>
<path d="M1138.4 487.6 L1140.3 489.1 L1136.1 491.1 L1134.9 488.5 Z"/>
<path d="M1210.0 491.6 L1208.0 488.8 L1210.8 485.7 L1215.3 488.4 L1213.6 490.1 Z"/>
<path d="M1028.6 626.9 L1026.3 628.5 L1024.0 627.8 L1025.9 625.1 L1028.2 625.4 Z"/>
<path d="M1120.4 496.0 L1120.3 498.0 L1118.0 497.5 L1118.2 495.8 Z"/>
<path d="M1169.9 460.5 L1172.6 460.9 L1173.0 463.4 L1169.9 464.7 L1168.8 461.9 Z"/>
<path d="M879.1 484.9 L881.3 485.3 L879.4 486.3 Z"/>
<path d="M1203.2 516.3 L1201.3 518.2 L1198.9 519.0 L1199.1 515.8 Z"/>
<path d="M1004.5 601.7 L1009.9 600.1 L1007.9 603.3 Z"/>
<path d="M1306.9 607.9 L1312.3 608.0 L1310.0 610.5 Z"/>
<path d="M1114.6 493.4 L1110.0 494.1 L1110.2 491.3 Z"/>
<path d="M1264.4 534.5 L1263.2 530.7 L1264.4 527.9 L1268.6 530.8 Z"/>
<path d="M885.0 455.1 L885.0 457.1 L883.4 459.0 L881.6 455.9 Z"/>
<path d="M1258.9 559.4 L1259.4 557.6 L1261.4 558.0 L1261.9 560.3 Z"/>
<path d="M1042.3 616.7 L1038.2 619.2 L1037.9 615.4 Z"/>
<path d="M1090.7 503.8 L1086.2 503.0 L1089.9 500.6 Z"/>
<path d="M1139.1 465.4 L1139.5 464.1 L1140.8 464.7 L1140.5 466.0 Z"/>
<path d="M1036.3 458.1 L1036.0 454.8 L1039.1 456.6 Z"/>
<path d="M933.8 570.0 L934.8 569.7 L935.4 571.0 L933.7 571.8 Z"/>
<path d="M942.3 459.4 L943.1 457.4 L945.4 455.3 L947.5 457.1 L944.4 459.8 Z"/>
<path d="M1221.6 598.4 L1220.6 600.7 L1217.9 599.7 L1219.1 598.4 Z"/>
<path d="M998.7 576.3 L1001.9 576.1 L1002.6 579.4 L997.3 579.9 Z"/>
<path d="M1174.1 543.2 L1169.5 544.4 L1166.9 542.7 L1169.2 539.3 Z"/>
<path d="M899.1 552.7 L897.9 555.0 L896.4 553.9 L897.0 551.6 Z"/>
<path d="M1109.8 475.7 L1113.1 477.4 L1111.0 479.1 L1109.0 478.2 Z"/>
<path d="M1279.5 588.2 L1279.6 589.1 L1278.4 590.3 L1276.5 589.3 L1276.7 587.9 Z"/>
<path d="M1297.7 462.6 L1301.3 464.4 L1299.9 466.9 L1296.8 465.6 Z"/>
<path d="M1283.1 449.1 L1286.3 450.9 L1285.0 453.3 L1282.8 452.7 Z"/>
<path d="M944.1 437.9 L939.9 437.3 L940.0 435.0 L943.1 434.3 Z"/>
<path d="M975.7 436.1 L975.2 433.9 L977.4 432.5 L979.4 434.8 Z"/>
<path d="M1096.6 433.8 L1097.8 434.5 L1097.4 436.5 L1095.0 435.9 Z"/>
<path d="M1087.5 505.8 L1083.3 507.5 L1083.4 504.0 L1085.8 504.2 Z"/>
<path d="M970.2 454.6 L968.9 452.7 L973.6 452.4 L975.4 454.9 Z"/>
<path d="M1201.6 439.3 L1200.7 435.8 L1204.4 434.6 L1205.6 436.8 Z"/>
<path d="M1304.5 490.9 L1304.9 492.5 L1302.2 493.7 L1301.9 490.5 Z"/>
<path d="M940.1 516.3 L941.4 517.8 L938.9 518.9 Z"/>
<path d="M1292.9 601.3 L1293.5 602.9 L1289.8 602.9 L1290.7 601.5 Z"/>
<path d="M1094.6 470.7 L1095.6 469.8 L1098.0 470.4 L1098.1 471.3 L1095.5 472.3 Z"/>
<path d="M1209.0 550.1 L1209.3 547.5 L1213.2 546.7 L1216.0 548.7 L1212.0 552.0 Z"/>
<path d="M1241.7 504.8 L1241.6 501.3 L1247.0 501.4 L1246.6 505.4 Z"/>
<path d="M1105.4 555.1 L1104.0 554.1 L1103.8 552.2 L1106.6 551.1 L1108.4 552.9 Z"/>
<path d="M1225.1 491.6 L1226.4 489.4 L1227.7 491.1 Z"/>
<path d="M1014.3 529.2 L1011.2 531.8 L1009.0 530.9 L1010.3 528.2 Z"/>
<path d="M912.9 443.7 L911.6 442.0 L913.6 441.0 L915.1 442.2 Z"/>
<path d="M925.3 531.0 L923.1 534.0 L919.9 531.0 L921.7 527.8 L925.7 528.0 Z"/>
<path d="M1013.2 598.5 L1018.0 595.8 L1018.8 600.6 Z"/>
<path d="M1205.8 461.5 L1205.9 459.2 L1208.7 460.0 L1207.6 462.1 Z"/>
<path d="M1294.0 467.3 L1296.8 464.4 L1299.7 466.9 L1296.8 469.3 Z"/>
<path d="M1058.7 612.0 L1060.1 610.4 L1060.6 612.7 Z"/>
<path d="M1064.9 515.2 L1066.6 518.9 L1063.3 518.9 L1061.7 517.0 Z"/>
<path d="M1282.8 534.5 L1285.0 537.9 L1281.4 539.7 L1280.1 535.0 Z"/>
<path d="M948.5 446.0 L947.4 445.3 L948.0 444.2 L949.1 444.7 Z"/>
<path d="M1088.0 440.8 L1087.9 442.4 L1085.9 442.4 L1086.2 440.2 Z"/>
<path d="M971.1 516.3 L970.0 521.4 L966.8 517.9 Z"/>
<path d="M995.8 482.6 L998.9 482.3 L996.9 485.0 Z"/>
<path d="M896.4 434.4 L895.9 432.5 L899.6 432.3 L899.2 434.6 Z"/>
<path d="M892.6 486.0 L891.9 483.8 L894.0 483.1 Z"/>
<path d="M943.8 510.5 L941.6 512.0 L939.6 509.5 L941.1 508.5 L944.8 509.2 Z"/>
<path d="M1244.0 527.6 L1243.5 533.1 L1238.5 529.6 Z"/>
<path d="M874.8 545.7 L870.5 544.4 L872.4 541.5 L875.8 540.8 Z"/>
<path d="M1258.3 585.0 L1260.3 582.2 L1262.0 584.1 Z"/>
<path d="M982.3 457.0 L982.7 459.8 L979.9 460.2 L977.8 458.0 L980.0 456.1 Z"/>
<path d="M1285.3 612.7 L1291.3 614.9 L1287.9 618.2 L1284.8 616.1 Z"/>
<path d="M1281.9 626.7 L1288.2 626.6 L1282.3 630.4 Z"/>
<path d="M994.0 608.5 L996.1 610.2 L993.2 612.5 L991.4 610.5 Z"/>
<path d="M1303.2 466.8 L1300.1 468.2 L1300.2 466.1 Z"/>
<path d="M1191.8 597.9 L1193.2 593.6 L1198.5 597.7 Z"/>
<path d="M956.0 487.5 L961.2 488.7 L957.9 490.0 Z"/>
<path d="M1071.0 566.5 L1068.4 563.6 L1072.6 562.2 Z"/>
<path d="M1132.3 448.4 L1134.6 450.3 L1132.3 452.6 L1128.2 450.6 Z"/>
<path d="M1163.8 550.2 L1164.8 545.6 L1168.6 546.8 L1170.5 548.4 L1165.9 551.9 Z"/>
<path d="M1130.6 599.3 L1131.8 597.7 L1137.4 598.3 L1134.3 601.5 Z"/>
<path d="M1176.0 441.7 L1177.9 442.7 L1177.9 444.6 L1175.7 444.2 L1174.7 442.9 Z"/>
<path d="M1054.1 564.1 L1057.6 565.4 L1055.2 567.4 L1053.4 565.4 Z"/>
<path d="M1008.6 499.0 L1009.4 501.4 L1007.8 502.9 L1006.4 501.1 Z"/>
<path d="M1299.0 530.1 L1298.6 528.3 L1300.1 527.1 L1302.0 528.3 L1300.2 530.6 Z"/>
<path d="M1265.7 614.3 L1264.1 615.5 L1262.7 613.3 L1265.4 612.9 Z"/>
<path d="M1224.2 433.5 L1225.9 436.1 L1223.3 438.1 L1219.1 435.3 L1219.7 433.8 Z"/>
<path d="M1190.4 596.4 L1190.7 597.5 L1188.6 598.4 L1188.5 596.8 Z"/>
<path d="M1312.5 585.0 L1308.2 585.5 L1308.6 583.4 L1310.3 582.3 L1312.5 582.7 Z"/>
<path d="M1056.1 501.9 L1053.4 498.3 L1058.0 496.5 L1059.1 499.5 Z"/>
<path d="M1014.4 602.3 L1009.1 598.1 L1013.1 597.3 L1017.2 598.6 Z"/>
<path d="M900.5 483.8 L900.2 484.9 L898.9 484.5 L898.9 483.6 Z"/>
<path d="M926.3 441.4 L927.5 444.2 L926.0 446.1 L921.8 444.6 L924.1 442.0 Z"/>
<path d="M956.1 522.9 L959.1 521.9 L959.0 524.1 Z"/>
<path d="M1190.0 625.1 L1191.0 626.2 L1188.6 627.6 Z"/>
<path d="M1140.4 522.3 L1137.4 521.7 L1139.7 520.9 Z"/>
<path d="M1002.4 451.5 L1008.0 452.6 L1004.8 454.7 Z"/>
<path d="M1195.6 595.9 L1192.9 596.1 L1191.7 594.5 L1195.5 593.7 Z"/>
<path d="M1263.7 614.6 L1260.9 615.5 L1260.9 613.1 Z"/>
<path d="M1311.2 577.7 L1312.3 579.3 L1310.3 581.4 L1308.9 579.7 Z"/>
<path d="M1072.7 435.5 L1074.5 435.7 L1073.0 437.2 Z"/>
<path d="M1236.8 612.7 L1233.2 613.8 L1233.4 611.4 Z"/>
<path d="M963.7 495.4 L964.5 491.5 L970.1 493.6 L967.5 496.6 Z"/>
<path d="M952.2 462.0 L956.5 463.2 L952.2 466.8 L949.7 464.7 Z"/>
<path d="M1117.0 430.2 L1115.7 426.7 L1120.6 427.1 Z"/>
<path d="M933.9 577.8 L933.8 580.2 L931.8 580.0 L931.4 578.3 Z"/>
<path d="M915.6 547.3 L916.2 548.1 L914.4 549.9 L912.6 548.3 L913.6 546.6 Z"/>
<path d="M1170.4 540.1 L1167.8 538.6 L1170.8 536.5 L1173.2 539.6 Z"/>
<path d="M1295.0 547.0 L1298.0 550.2 L1293.0 551.8 L1292.1 547.7 Z"/>
<path d="M1079.7 454.6 L1077.1 452.1 L1079.9 450.7 L1082.1 452.2 Z"/>
<path d="M1091.4 607.7 L1088.5 609.7 L1087.1 608.1 L1087.1 605.8 Z"/>
<path d="M1192.9 550.3 L1189.7 552.7 L1186.5 551.3 L1186.9 548.5 L1188.7 548.0 Z"/>
<path d="M1193.0 578.4 L1191.4 576.4 L1193.5 575.7 L1195.2 577.3 Z"/>
<path d="M1072.4 537.8 L1070.1 537.7 L1068.9 537.1 L1070.0 535.0 L1071.7 536.2 Z"/>
<path d="M1119.7 512.1 L1119.8 510.1 L1121.3 509.8 L1121.8 511.4 Z"/>
<path d="M969.4 493.3 L974.3 493.7 L975.6 496.8 L973.4 497.7 L969.4 496.3 Z"/>
<path d="M1170.6 476.8 L1171.7 474.5 L1176.6 475.0 L1175.7 477.2 Z"/>
<path d="M957.9 496.1 L956.3 498.2 L954.8 496.8 Z"/>
<path d="M1295.7 493.5 L1293.7 490.1 L1296.6 487.7 L1299.4 489.9 L1299.5 492.0 Z"/>
<path d="M919.7 616.1 L917.6 615.3 L918.0 613.1 L920.5 613.1 Z"/>
<path d="M916.4 422.9 L918.4 426.3 L915.2 427.5 L911.5 426.3 Z"/>
<path d="M916.5 431.3 L914.7 430.1 L917.1 429.3 Z"/>
<path d="M1146.3 512.7 L1147.9 514.5 L1147.0 516.6 L1144.5 516.2 L1144.7 513.6 Z"/>
<path d="M1230.4 618.8 L1233.8 616.6 L1233.0 620.1 Z"/>
<path d="M1105.3 496.8 L1103.7 498.7 L1101.2 497.0 L1102.8 495.0 Z"/>
<path d="M649.2 489.4 L653.4 486.8 L656.0 491.4 L651.6 491.5 Z"/>
<path d="M665.0 450.2 L669.4 452.2 L665.3 455.1 L662.9 453.4 Z"/>
<path d="M653.4 475.4 L654.4 472.6 L657.9 473.4 L656.5 476.4 Z"/>
<path d="M652.6 473.2 L653.8 468.0 L660.4 468.6 L661.8 473.0 L658.6 474.6 Z"/>
<path d="M664.9 459.4 L669.0 457.1 L671.7 462.2 L669.8 464.3 L664.0 463.5 Z"/>
<path d="M668.7 496.6 L669.6 491.3 L677.0 491.2 L678.7 496.1 L675.9 498.2 Z"/>
<path d="M656.1 505.3 L656.9 508.2 L652.7 508.0 Z"/>
<path d="M674.8 497.1 L672.4 501.1 L663.4 500.5 L667.4 494.5 Z"/>
<path d="M671.7 509.5 L672.6 504.6 L678.7 506.1 L680.4 509.6 L674.5 512.5 Z"/>
<path d="M691.3 465.7 L692.1 468.7 L688.0 469.5 L687.2 466.5 Z"/>
<path d="M633.3 443.7 L637.4 446.7 L631.7 450.6 L629.5 447.6 L629.7 444.7 Z"/>
<path d="M628.9 454.0 L628.1 450.8 L632.7 449.3 L633.8 454.1 Z"/>
<path d="M658.4 504.8 L658.6 509.2 L654.8 512.1 L647.6 510.7 L647.1 505.9 Z"/>
<path d="M626.0 470.6 L633.8 471.0 L628.6 476.6 Z"/>
<path d="M652.8 465.2 L651.0 460.2 L655.0 460.3 L656.6 464.6 Z"/>
<path d="M668.3 487.7 L672.7 488.1 L669.4 491.1 Z"/>
<path d="M678.7 505.5 L673.9 509.2 L669.3 505.2 L672.4 502.5 L678.0 503.0 Z"/>
<path d="M677.4 448.2 L682.1 450.6 L680.4 454.1 L676.3 453.0 Z"/>
<path d="M931.3 597.9 L922.9 600.7 L922.2 594.6 Z"/>
<path d="M914.4 590.3 L908.0 592.4 L907.6 588.5 L911.3 588.7 Z"/>
<path d="M881.3 607.2 L884.1 604.8 L888.3 606.5 L885.3 609.3 Z"/>
<path d="M928.7 623.6 L932.0 627.5 L927.7 630.5 L924.3 628.5 Z"/>
<path d="M899.5 616.8 L893.3 617.6 L890.1 614.4 L892.1 611.7 L898.7 612.0 Z"/>
<path d="M848.0 609.0 L851.5 604.2 L857.6 606.2 L852.6 610.1 Z"/>
<path d="M923.6 572.7 L924.3 575.4 L920.6 575.4 L920.6 572.8 L921.1 571.8 Z"/>
<path d="M855.6 578.9 L856.6 581.9 L852.6 581.1 Z"/>
<path d="M851.6 599.3 L847.4 595.0 L852.9 591.1 L858.9 596.3 Z"/>
<path d="M928.7 617.6 L932.1 617.6 L930.2 624.6 L926.6 622.6 L924.0 619.0 Z"/>
<path d="M913.0 616.4 L918.3 613.1 L917.7 617.7 Z"/>
<path d="M920.8 625.5 L919.6 620.3 L923.9 622.3 Z"/>
<path d="M933.6 613.1 L932.5 617.2 L923.7 611.9 L929.9 609.6 Z"/>
<path d="M915.1 611.7 L912.8 607.2 L920.1 607.3 Z"/>
<path d="M895.9 606.5 L899.1 603.4 L900.0 608.3 Z"/>
<path d="M883.0 627.2 L890.7 625.5 L892.4 633.2 L884.1 633.5 Z"/>
<path d="M927.6 620.4 L927.1 615.4 L931.7 616.1 L931.6 619.3 Z"/>
<path d="M891.8 595.5 L887.3 597.7 L884.3 589.7 L893.6 588.1 Z"/>
<path d="M859.3 598.6 L855.2 601.7 L854.1 596.0 Z"/>
<path d="M866.7 610.3 L860.1 610.5 L860.8 606.2 L864.5 605.4 Z"/>
<path d="M882.4 589.7 L884.0 583.5 L889.8 588.2 Z"/>
<path d="M872.5 579.2 L868.5 582.6 L862.8 579.9 L867.4 575.6 Z"/>
<path d="M863.4 615.8 L859.8 615.9 L859.1 612.3 L863.3 611.6 Z"/>
<path d="M887.2 581.7 L884.3 581.1 L886.0 577.7 Z"/>
<path d="M862.1 580.6 L866.8 578.2 L868.0 581.1 L862.2 583.7 Z"/>
<path d="M910.2 610.6 L913.2 608.8 L915.6 611.7 L910.4 613.9 Z"/>
<path d="M859.1 629.2 L862.9 624.3 L863.9 629.0 Z"/>
<path d="M902.6 586.4 L903.3 590.8 L897.1 591.9 L895.0 588.8 L896.3 586.6 Z"/>
<path d="M858.9 611.1 L861.2 612.5 L859.7 614.3 L856.7 614.6 L857.0 611.2 Z"/>
<path d="M887.6 594.3 L882.8 592.6 L884.6 590.4 L889.6 591.3 Z"/>
<path d="M1289.3 519.2 L1288.1 522.0 L1285.5 521.5 L1285.2 518.4 L1287.4 517.9 Z"/>
<path d="M1291.0 587.8 L1282.6 594.6 L1282.2 584.5 Z"/>
<path d="M1247.8 468.9 L1240.8 472.4 L1243.2 464.9 Z"/>
<path d="M1244.2 455.4 L1245.7 458.4 L1244.0 461.5 L1239.3 459.0 Z"/>
<path d="M1246.9 444.5 L1239.5 444.0 L1240.8 438.7 L1247.4 438.8 Z"/>
<path d="M1287.0 492.9 L1294.9 491.9 L1292.1 496.2 Z"/>
<path d="M1254.4 485.4 L1248.0 485.7 L1245.0 483.0 L1252.4 481.1 Z"/>
<path d="M1226.7 436.1 L1232.6 432.0 L1234.5 438.1 L1229.7 440.3 Z"/>
<path d="M1246.1 625.7 L1251.6 630.2 L1244.8 632.5 Z"/>
<path d="M1238.2 582.5 L1233.2 585.2 L1233.6 579.0 Z"/>
<path d="M1263.4 600.0 L1266.7 597.5 L1271.0 599.1 L1267.1 602.4 Z"/>
<path d="M1243.2 470.2 L1245.5 465.6 L1249.4 464.8 L1253.5 468.3 L1250.2 472.9 Z"/>
<path d="M1288.9 581.1 L1284.1 580.6 L1288.8 578.1 Z"/>
<path d="M1230.3 431.3 L1228.1 429.3 L1231.0 426.9 L1234.2 427.8 L1233.8 430.0 Z"/>
<path d="M1292.4 440.4 L1295.5 443.4 L1293.5 444.1 L1290.7 442.9 Z"/>
<path d="M1306.3 629.2 L1299.4 633.6 L1297.7 626.9 L1303.0 625.0 Z"/>
<path d="M1309.4 564.2 L1313.1 561.7 L1315.8 563.2 L1316.0 565.0 L1313.8 566.4 Z"/>
<path d="M1232.4 628.1 L1225.4 627.2 L1223.4 622.8 L1230.1 619.3 L1234.8 622.9 Z"/>
<path d="M1297.8 508.3 L1301.6 517.0 L1292.4 516.1 Z"/>
<path d="M1285.6 608.2 L1289.9 608.8 L1289.0 614.5 L1285.8 614.4 L1283.1 610.4 Z"/>
<path d="M1227.6 604.4 L1232.5 604.1 L1237.4 609.6 L1230.6 610.8 Z"/>
<path d="M1271.2 450.1 L1273.6 450.1 L1273.5 452.5 L1270.3 453.3 L1269.5 452.5 Z"/>
<path d="M1308.8 452.7 L1306.0 453.8 L1307.0 450.8 Z"/>
<path d="M1230.1 492.7 L1235.3 489.3 L1241.0 493.5 L1237.1 496.5 Z"/>
<path d="M1254.0 578.2 L1257.3 580.6 L1253.9 581.6 Z"/>
<path d="M1272.5 550.8 L1277.4 546.4 L1280.8 552.3 Z"/>
<path d="M1239.7 606.2 L1242.4 611.2 L1241.9 615.0 L1233.8 612.7 L1234.9 609.1 Z"/>
<path d="M1236.8 489.8 L1238.8 489.8 L1240.4 493.1 L1235.2 493.1 Z"/>
<path d="M1246.6 501.7 L1240.1 498.5 L1243.1 492.6 L1250.5 497.6 Z"/>
<path d="M1288.7 593.7 L1287.9 591.1 L1291.0 591.2 L1292.0 594.4 Z"/>
<path d="M1294.1 556.9 L1301.3 563.1 L1295.4 564.2 L1292.2 560.6 Z"/>
<path d="M1276.5 429.6 L1275.9 431.1 L1273.8 429.9 L1275.1 427.3 Z"/>
<path d="M1311.4 597.0 L1309.2 600.5 L1305.2 599.5 L1306.8 595.2 Z"/>
<path d="M1225.9 514.4 L1230.1 510.9 L1235.7 516.2 L1230.9 519.7 Z"/>
<path d="M1301.6 427.5 L1299.0 425.5 L1300.8 422.5 L1304.5 425.6 Z"/>
<path d="M1293.3 508.2 L1295.6 509.4 L1293.6 511.2 L1292.5 511.9 L1291.4 509.3 Z"/>
<path d="M1304.8 579.3 L1301.7 582.4 L1298.7 579.8 L1300.5 577.9 Z"/>
<path d="M1275.8 510.6 L1277.2 511.8 L1274.9 512.9 L1273.0 513.1 L1272.8 511.2 Z"/>
<path d="M1282.1 608.8 L1282.9 607.1 L1287.5 608.4 L1288.7 609.9 L1284.0 613.3 Z"/>
<path d="M1297.8 475.2 L1297.9 470.0 L1305.9 471.2 L1304.6 475.5 Z"/>
<path d="M1313.0 522.3 L1310.1 521.6 L1310.2 519.4 L1312.8 519.7 L1314.1 521.4 Z"/>
<path d="M1312.0 523.5 L1314.2 529.9 L1307.6 528.3 L1305.7 523.6 Z"/>
<path d="M1254.6 481.2 L1255.3 485.6 L1248.9 487.3 L1246.2 480.2 Z"/>
<path d="M1276.8 456.0 L1276.5 457.4 L1275.6 459.4 L1272.8 457.6 L1273.4 455.5 Z"/>
<path d="M1285.7 561.3 L1282.0 562.0 L1280.5 558.0 L1287.0 557.1 Z"/>
<path d="M1229.6 516.3 L1234.1 517.6 L1233.3 521.5 L1229.1 521.5 Z"/>
<path d="M1252.4 436.4 L1250.3 441.1 L1245.1 438.9 Z"/>
<path d="M1293.4 534.8 L1303.4 535.2 L1304.1 541.8 L1296.9 542.6 Z"/>
<path d="M1269.2 566.0 L1269.0 568.9 L1263.8 568.5 L1262.1 566.2 L1265.2 564.2 Z"/>
<path d="M1253.1 472.8 L1257.1 473.6 L1256.3 476.8 L1251.6 476.6 Z"/>
<path d="M1303.0 432.2 L1307.6 434.9 L1304.4 440.3 L1299.6 436.3 Z"/>
<path d="M1269.3 620.0 L1267.5 618.0 L1267.3 614.7 L1272.8 615.9 L1271.5 619.7 Z"/>
<path d="M1250.7 499.8 L1243.2 497.1 L1242.6 492.9 L1251.6 492.5 Z"/>
<path d="M1281.3 433.4 L1279.5 435.9 L1275.3 434.2 L1276.4 432.9 Z"/>
<path d="M1262.7 532.9 L1260.6 534.2 L1258.1 531.3 L1259.9 530.2 Z"/>
<path d="M1286.9 615.6 L1287.6 620.3 L1284.2 621.5 L1281.6 618.4 L1284.8 614.9 Z"/>
<path d="M1276.3 614.5 L1271.4 618.1 L1266.1 616.7 L1268.7 611.5 L1271.4 609.5 Z"/>
<path d="M1252.2 455.3 L1253.2 452.7 L1255.2 454.6 Z"/>
<path d="M1302.5 617.7 L1309.6 615.2 L1312.9 617.1 L1312.7 622.1 L1305.0 623.3 Z"/>
<path d="M1315.3 476.1 L1312.4 478.9 L1310.5 476.1 Z"/>
<path d="M1259.8 546.9 L1261.2 548.7 L1260.3 550.1 L1257.1 548.5 Z"/>
<path d="M1250.7 611.1 L1255.7 606.6 L1261.9 609.8 L1256.1 612.5 Z"/>
<path d="M1287.3 426.4 L1279.9 429.6 L1275.2 425.2 L1283.2 421.3 Z"/>
<path d="M1296.7 523.1 L1289.7 521.9 L1290.7 516.9 L1294.9 516.6 Z"/>
<path d="M1261.0 598.0 L1261.9 600.8 L1257.9 601.6 L1256.1 599.8 L1257.3 597.6 Z"/>
<path d="M1252.9 436.1 L1255.4 441.0 L1248.2 439.3 Z"/>
<path d="M1253.8 432.1 L1249.7 429.0 L1257.8 428.5 Z"/>
<path d="M1241.5 529.4 L1243.3 533.8 L1237.9 534.5 L1238.3 529.9 Z"/>
<path d="M1260.6 622.9 L1263.3 621.4 L1269.0 622.2 L1267.4 627.2 L1262.2 625.6 Z"/>
<path d="M1254.7 612.7 L1258.0 611.6 L1259.7 614.2 L1256.4 615.6 Z"/>
<path d="M1306.5 623.1 L1315.5 627.8 L1305.6 629.3 Z"/>
<path d="M1242.1 470.9 L1241.9 477.6 L1234.9 474.3 Z"/>
<path d="M1248.8 492.8 L1242.9 493.9 L1240.6 486.8 L1245.2 482.5 L1253.0 489.9 Z"/>
<path d="M1238.4 561.3 L1240.1 557.5 L1244.1 557.7 L1245.0 561.7 L1239.8 563.2 Z"/>
<path d="M1306.2 592.1 L1302.9 594.5 L1299.2 590.3 L1304.1 587.9 Z"/>
<path d="M1240.5 597.2 L1234.3 596.4 L1235.9 592.4 L1239.9 592.8 Z"/>
<path d="M1262.8 590.3 L1266.9 590.8 L1267.1 596.7 L1259.6 596.8 L1255.9 593.5 Z"/>
<path d="M1239.9 525.3 L1243.7 519.6 L1250.5 524.1 L1244.0 530.1 Z"/>
<path d="M1294.1 521.5 L1296.3 523.2 L1295.4 524.9 L1293.3 525.1 L1292.8 522.6 Z"/>
<path d="M1242.8 505.1 L1246.5 512.2 L1239.5 514.7 Z"/>
<path d="M1228.0 532.1 L1232.1 528.9 L1234.0 530.9 L1231.8 534.7 Z"/>
<path d="M1263.5 430.5 L1265.6 433.5 L1259.7 435.6 L1257.9 432.1 L1258.4 430.0 Z"/>
<path d="M1245.2 574.2 L1246.7 577.7 L1241.7 576.0 Z"/>
<path d="M1306.9 574.9 L1306.5 576.9 L1303.8 576.8 L1304.2 574.6 Z"/>
<path d="M1242.7 489.3 L1239.3 490.6 L1238.8 487.9 L1240.9 485.8 L1244.2 486.5 Z"/>
<path d="M1307.5 531.1 L1314.5 529.2 L1315.0 534.7 Z"/>
<path d="M1274.9 593.3 L1282.5 599.3 L1274.7 602.6 L1272.6 596.3 Z"/>
<path d="M1255.9 486.6 L1256.4 482.8 L1260.9 486.2 Z"/>
<path d="M1251.9 517.2 L1250.2 518.8 L1246.9 516.2 L1246.1 514.2 L1250.4 513.3 Z"/>
<path d="M1297.4 612.6 L1295.8 613.3 L1294.6 612.0 L1296.9 610.4 Z"/>
<path d="M1300.0 595.6 L1296.8 596.8 L1297.8 593.9 Z"/>
<path d="M1214.9 562.6 L1216.6 565.7 L1212.1 566.7 Z"/>
<path d="M1302.0 574.7 L1298.5 577.8 L1295.0 576.2 L1293.7 571.4 L1295.7 569.7 Z"/>
<path d="M1202.5 582.2 L1196.3 582.9 L1192.7 577.5 L1200.1 575.8 Z"/>
<path d="M1231.0 572.7 L1226.3 572.7 L1222.6 569.4 L1228.6 566.7 L1231.9 568.5 Z"/>
<path d="M1197.4 603.6 L1193.0 605.3 L1192.2 602.4 L1195.3 600.9 Z"/>
<path d="M1298.6 611.0 L1303.2 609.7 L1301.6 614.1 L1297.4 614.3 Z"/>
<path d="M1209.3 619.8 L1207.1 618.5 L1209.9 616.6 Z"/>
<path d="M1290.6 605.6 L1291.7 602.9 L1293.3 604.8 Z"/>
<path d="M1305.2 600.6 L1307.5 603.0 L1303.4 605.6 L1302.6 602.8 Z"/>
<path d="M1299.1 568.1 L1299.4 564.4 L1308.7 562.7 L1307.0 570.1 Z"/>
<path d="M1282.2 590.3 L1288.8 593.1 L1282.3 596.0 Z"/>
<path d="M1268.1 575.7 L1269.2 579.0 L1266.8 578.8 L1266.4 575.9 Z"/>
<path d="M1235.3 569.7 L1239.9 566.6 L1239.8 572.9 Z"/>
<path d="M1268.5 563.8 L1266.9 567.3 L1261.9 567.7 L1261.9 563.0 Z"/>
<path d="M1306.9 579.4 L1310.1 577.0 L1310.2 580.5 Z"/>
<path d="M1214.8 582.3 L1208.0 589.9 L1202.8 584.4 L1208.0 580.5 Z"/>
<path d="M1311.4 579.9 L1308.5 579.6 L1306.7 578.2 L1309.4 576.6 L1312.9 578.3 Z"/>
<path d="M1260.3 564.5 L1251.4 567.6 L1253.7 561.4 Z"/>
<path d="M1202.8 613.7 L1197.2 606.2 L1210.7 608.6 Z"/>
<path d="M1214.0 614.6 L1221.1 612.1 L1222.1 617.9 L1215.6 619.0 Z"/>
<path d="M1196.9 609.4 L1198.6 610.6 L1198.4 611.7 L1195.5 610.1 Z"/>
<path d="M1208.9 563.7 L1205.0 560.2 L1209.1 559.2 L1209.9 561.0 Z"/>
<path d="M1183.4 568.0 L1182.0 566.2 L1182.3 564.3 L1185.2 566.3 Z"/>
<path d="M1262.5 613.1 L1270.9 609.4 L1274.6 612.1 L1269.6 618.6 Z"/>
<path d="M1278.0 617.5 L1280.2 619.2 L1278.8 621.7 L1276.6 621.1 L1275.5 617.5 Z"/>
<path d="M1251.2 585.9 L1243.2 591.0 L1239.8 585.6 L1246.8 582.8 Z"/>
<path d="M1211.6 579.3 L1213.0 577.4 L1216.2 579.1 L1215.3 582.7 L1210.6 582.4 Z"/>
<path d="M1239.1 573.0 L1239.7 575.7 L1231.4 575.9 L1230.5 568.9 L1234.6 566.9 Z"/>
<path d="M1239.9 592.5 L1243.0 590.8 L1243.3 593.4 L1240.6 594.2 Z"/>
<path d="M1197.0 569.9 L1198.3 565.5 L1202.8 568.1 Z"/>
<path d="M1219.4 625.7 L1215.8 621.8 L1219.4 617.9 L1227.7 622.9 Z"/>
<path d="M1258.5 577.1 L1255.3 573.3 L1258.3 570.0 L1262.2 572.2 L1263.1 574.5 Z"/>
<path d="M1196.2 557.6 L1201.4 562.1 L1191.2 563.2 Z"/>
<path d="M1294.2 583.7 L1285.0 580.8 L1288.7 577.3 Z"/>
<path d="M1204.2 609.9 L1204.0 613.6 L1201.2 612.3 Z"/>
<path d="M1298.4 620.6 L1301.0 616.7 L1305.2 619.1 L1301.9 623.0 Z"/>
<path d="M1232.5 580.7 L1235.6 586.8 L1227.1 583.1 Z"/>
<path d="M1304.0 619.9 L1303.5 617.2 L1307.6 617.8 Z"/>
<path d="M1300.2 623.3 L1296.1 623.6 L1297.2 621.5 Z"/>
<path d="M1052.8 474.4 L1048.6 474.1 L1050.0 470.0 L1052.4 468.9 L1054.1 473.4 Z"/>
<path d="M1031.1 447.1 L1028.2 446.9 L1029.8 445.4 Z"/>
<path d="M1080.4 470.0 L1076.8 467.1 L1080.4 466.1 Z"/>
<path d="M1033.4 440.9 L1035.4 440.1 L1037.5 441.9 L1034.3 442.8 Z"/>
<path d="M1028.9 458.0 L1028.9 453.3 L1034.8 454.6 L1034.6 458.3 Z"/>
<path d="M1000.7 452.5 L999.9 449.1 L1003.4 448.8 L1003.8 451.7 Z"/>
<path d="M1004.7 446.9 L1002.8 450.6 L1000.1 447.3 L1003.2 444.8 Z"/>
<path d="M1098.5 470.9 L1102.1 471.8 L1101.4 472.6 L1100.1 474.0 L1097.7 471.8 Z"/>
<path d="M1069.8 455.0 L1065.6 457.4 L1061.4 452.2 L1068.8 450.0 Z"/>
<path d="M1066.6 448.8 L1070.1 443.2 L1076.7 447.4 L1072.8 452.5 Z"/>
<path d="M1080.4 466.1 L1086.7 467.9 L1083.5 472.7 L1080.8 470.7 Z"/>
<path d="M1040.7 470.5 L1038.4 471.3 L1034.7 467.5 L1038.1 466.7 L1042.8 468.7 Z"/>
<path d="M1077.3 476.0 L1084.1 478.0 L1080.4 482.2 L1075.3 481.0 Z"/>
<path d="M1083.1 444.0 L1086.3 440.0 L1089.2 441.6 L1087.6 445.3 Z"/>
<path d="M1023.3 452.5 L1028.7 454.9 L1021.7 458.4 L1018.5 454.2 Z"/>
<path d="M1054.9 449.9 L1049.6 449.6 L1053.4 445.4 Z"/>
<path d="M1080.9 456.7 L1077.8 454.2 L1080.3 451.9 L1084.2 454.6 Z"/>
<path d="M1024.4 441.0 L1016.9 442.3 L1017.4 435.3 Z"/>
<path d="M1006.5 454.7 L1010.5 452.0 L1012.4 454.6 L1010.7 459.3 L1005.9 458.6 Z"/>
<path d="M1001.9 427.1 L1003.7 422.3 L1007.0 422.7 L1010.1 426.3 L1006.7 428.4 Z"/>
<path d="M1054.0 456.0 L1055.5 451.9 L1058.6 453.3 L1057.1 456.0 Z"/>
<path d="M1095.1 456.2 L1093.7 450.1 L1100.1 452.9 Z"/>
<path d="M1073.9 424.1 L1074.4 429.6 L1071.2 426.5 Z"/>
<path d="M1014.0 470.1 L1016.3 466.7 L1020.0 469.3 L1018.0 470.6 Z"/>
<path d="M1040.3 434.9 L1044.0 435.4 L1044.9 437.2 L1041.0 437.9 Z"/>
<path d="M1090.2 474.4 L1088.8 479.4 L1086.6 479.5 L1084.9 475.4 Z"/>
<path d="M1062.0 438.3 L1065.9 441.9 L1060.0 443.4 Z"/>
<path d="M1048.0 477.8 L1045.3 476.8 L1045.1 475.4 L1047.1 474.6 L1049.5 475.3 Z"/>
<path d="M1098.5 464.5 L1103.6 469.8 L1097.5 473.1 L1095.5 469.2 Z"/>
<path d="M1021.3 427.0 L1026.3 429.2 L1023.0 433.0 L1015.9 431.6 L1014.0 428.8 Z"/>
<path d="M1186.1 499.6 L1188.7 500.7 L1190.2 503.0 L1185.4 503.7 L1184.5 501.4 Z"/>
<path d="M1187.5 493.3 L1190.8 489.6 L1194.4 494.9 L1188.2 497.2 Z"/>
<path d="M1220.3 475.0 L1217.0 472.0 L1220.2 469.5 L1223.1 472.5 Z"/>
<path d="M1241.1 444.2 L1240.1 446.2 L1238.3 446.9 L1236.9 445.6 L1239.2 441.8 Z"/>
<path d="M1185.9 522.3 L1187.7 517.7 L1191.1 520.2 Z"/>
<path d="M1234.3 504.4 L1230.5 504.7 L1230.7 502.8 L1234.2 502.4 Z"/>
<path d="M1163.1 470.0 L1169.0 466.5 L1170.3 472.1 Z"/>
<path d="M1174.2 480.1 L1171.8 479.7 L1171.6 477.7 L1174.4 476.8 Z"/>
<path d="M1197.3 458.2 L1199.6 455.8 L1201.6 457.9 L1199.9 460.2 Z"/>
<path d="M1202.1 499.1 L1204.3 501.3 L1203.5 503.2 L1200.6 500.8 Z"/>
<path d="M1226.7 515.3 L1232.5 515.1 L1232.1 518.1 L1229.3 519.0 Z"/>
<path d="M1172.2 484.5 L1177.3 484.3 L1174.1 489.9 L1169.6 486.8 Z"/>
<path d="M1175.9 510.6 L1177.5 508.2 L1180.9 508.4 L1182.7 511.7 L1178.2 513.2 Z"/>
<path d="M1175.3 486.4 L1173.2 484.8 L1175.7 484.1 Z"/>
<path d="M1232.6 451.8 L1234.6 456.1 L1226.4 457.3 L1227.6 451.5 Z"/>
<path d="M1217.4 481.4 L1215.1 482.7 L1213.3 482.9 L1212.3 479.7 L1215.3 479.7 Z"/>
<path d="M1206.0 453.1 L1204.7 452.5 L1205.5 450.6 L1206.6 450.9 L1207.2 452.3 Z"/>
<path d="M1226.4 457.7 L1227.7 460.9 L1224.7 459.4 Z"/>
<path d="M1204.4 499.2 L1205.0 501.3 L1203.9 503.3 L1201.1 502.9 L1201.0 500.9 Z"/>
<path d="M1210.5 515.4 L1207.3 511.6 L1210.4 507.1 L1216.2 511.7 Z"/>
<path d="M847.2 533.4 L841.3 535.2 L839.6 530.3 Z"/>
<path d="M787.8 547.9 L792.0 546.6 L792.0 548.9 L789.4 549.8 Z"/>
<path d="M774.7 470.6 L777.5 471.2 L776.5 473.6 L773.2 472.8 Z"/>
<path d="M758.3 582.6 L758.1 579.5 L762.1 579.9 Z"/>
<path d="M811.8 555.2 L812.0 551.9 L816.4 554.1 L814.3 555.4 Z"/>
<path d="M714.5 507.9 L710.3 508.0 L711.1 504.9 L715.5 505.5 Z"/>
<path d="M842.9 611.7 L843.5 609.8 L845.3 610.6 L845.2 612.3 L843.6 613.1 Z"/>
<path d="M783.3 487.1 L783.7 489.4 L781.0 490.1 L780.5 487.1 Z"/>
<path d="M844.4 537.8 L842.5 539.8 L840.1 537.3 L843.8 535.3 Z"/>
<path d="M734.7 623.9 L733.0 623.4 L733.6 621.0 L735.8 621.1 L737.0 622.5 Z"/>
<path d="M719.3 505.7 L721.8 506.2 L720.8 507.5 L719.2 507.7 Z"/>
<path d="M818.6 581.2 L822.4 580.2 L822.3 583.3 L819.1 584.6 Z"/>
<path d="M719.2 471.1 L720.6 472.1 L718.6 473.7 L717.7 472.0 Z"/>
<path d="M742.6 458.5 L745.7 457.1 L745.4 460.7 Z"/>
<path d="M835.1 464.2 L833.8 464.8 L832.7 463.9 L834.4 463.3 Z"/>
<path d="M746.9 597.7 L745.2 599.0 L743.2 597.2 L745.6 596.7 Z"/>
<path d="M813.3 491.0 L815.8 488.7 L820.2 490.8 L813.6 493.1 Z"/>
<path d="M771.9 542.6 L768.3 543.4 L765.5 539.8 L769.1 537.7 L772.2 538.6 Z"/>
<path d="M739.0 571.0 L740.0 569.9 L741.3 571.2 L741.2 572.5 L739.0 572.9 Z"/>
<path d="M799.6 503.8 L796.7 503.8 L796.8 501.6 L799.5 501.2 L800.1 502.0 Z"/>
<path d="M811.6 503.3 L810.3 498.8 L814.1 497.4 L816.4 500.6 Z"/>
<path d="M698.6 460.7 L699.4 457.1 L705.0 457.6 L705.1 460.9 Z"/>
<path d="M808.3 531.9 L807.2 533.9 L802.6 532.3 L807.2 528.1 Z"/>
<path d="M801.7 459.4 L802.1 458.1 L803.6 459.5 Z"/>
<path d="M815.6 517.2 L814.2 516.7 L814.5 514.8 L816.1 515.0 L817.4 515.8 Z"/>
<path d="M781.5 605.0 L783.4 603.2 L785.4 603.6 L785.9 606.6 L784.1 607.0 Z"/>
<path d="M699.9 622.8 L703.6 622.1 L704.5 624.3 L701.4 626.1 Z"/>
<path d="M823.5 486.2 L821.0 486.4 L822.0 483.7 L824.2 482.7 L824.9 484.8 Z"/>
<path d="M757.7 578.4 L757.2 579.6 L754.3 579.6 L754.8 578.3 Z"/>
<path d="M777.7 440.0 L780.0 440.5 L779.8 442.3 L777.8 442.0 Z"/>
<path d="M822.1 616.0 L824.2 615.4 L823.6 617.6 Z"/>
<path d="M849.8 576.4 L852.1 578.8 L848.2 581.8 L846.7 578.6 Z"/>
<path d="M831.3 567.8 L828.2 563.2 L833.6 563.2 Z"/>
<path d="M741.9 515.1 L738.9 513.8 L740.6 512.6 L742.3 513.2 Z"/>
<path d="M838.3 579.9 L839.7 581.9 L835.6 582.6 L835.7 579.8 Z"/>
</g>
<g fill="none" stroke="#fbfbfa" stroke-width="1.1">
<path d="M125.0 423.0 C125.5 427.5 126.3 440.5 128.0 450.0 C129.7 459.5 133.8 475.0 135.0 480.0"/>
<path d="M208.0 473.0 C211.7 476.7 219.7 489.7 230.0 495.0 C240.3 500.3 258.3 500.8 270.0 505.0 C281.7 509.2 290.0 510.8 300.0 520.0 C310.0 529.2 325.0 553.3 330.0 560.0"/>
<path d="M230.0 440.0 C235.0 438.3 248.3 432.8 260.0 430.0 C271.7 427.2 293.3 424.2 300.0 423.0"/>
<path d="M330.0 470.0 C335.0 468.3 348.3 464.2 360.0 460.0 C371.7 455.8 386.7 448.3 400.0 445.0 C413.3 441.7 433.3 440.8 440.0 440.0"/>
<path d="M300.0 520.0 C306.7 516.7 326.7 505.0 340.0 500.0 C353.3 495.0 373.3 491.7 380.0 490.0"/>
<path d="M440.0 520.0 C446.7 518.3 466.7 513.3 480.0 510.0 C493.3 506.7 506.7 501.7 520.0 500.0 C533.3 498.3 553.3 500.0 560.0 500.0"/>
<path d="M470.0 540.0 C475.0 540.8 490.0 543.3 500.0 545.0 C510.0 546.7 520.0 547.5 530.0 550.0 C540.0 552.5 555.0 558.3 560.0 560.0"/>
<path d="M380.0 630.0 C386.7 627.0 406.7 615.3 420.0 612.0 C433.3 608.7 446.7 608.7 460.0 610.0 C473.3 611.3 493.3 618.3 500.0 620.0"/>
<path d="M880.0 520.0 C886.7 521.7 906.7 526.7 920.0 530.0 C933.3 533.3 953.3 538.3 960.0 540.0"/>
<path d="M860.0 490.0 C866.7 490.8 886.7 492.5 900.0 495.0 C913.3 497.5 933.3 503.3 940.0 505.0"/>
<path d="M1000.0 460.0 C1005.0 459.2 1018.3 458.3 1030.0 455.0 C1041.7 451.7 1063.3 442.5 1070.0 440.0"/>
<path d="M1140.0 540.0 C1146.7 538.3 1168.3 533.3 1180.0 530.0 C1191.7 526.7 1205.0 521.7 1210.0 520.0"/>
<path d="M1240.0 520.0 C1243.3 523.3 1251.7 533.3 1260.0 540.0 C1268.3 546.7 1285.0 556.7 1290.0 560.0"/>
<path d="M880.0 570.0 C886.7 568.3 908.3 561.7 920.0 560.0 C931.7 558.3 945.0 560.0 950.0 560.0"/>
<path d="M1050.0 560.0 C1055.0 563.3 1071.7 573.3 1080.0 580.0 C1088.3 586.7 1096.7 596.7 1100.0 600.0"/>
<path d="M600.0 540.0 C606.7 543.3 630.0 550.0 640.0 560.0 C650.0 570.0 651.7 588.3 660.0 600.0 C668.3 611.7 685.0 625.0 690.0 630.0"/>
<path d="M1146.6 576.5 C1147.9 574.1 1150.4 566.1 1154.6 561.6 C1158.9 557.1 1168.4 552.8 1172.1 549.6 C1175.9 546.4 1176.1 545.9 1177.3 542.4 C1178.5 538.8 1178.9 530.6 1179.3 528.2"/>
<path d="M1255.6 501.8 C1257.5 501.7 1261.6 502.8 1267.3 501.3 C1272.9 499.9 1285.7 494.6 1289.4 493.3"/>
<path d="M1210.0 456.0 C1211.1 453.7 1216.0 448.5 1216.9 442.1 C1217.8 435.7 1215.7 421.7 1215.5 417.6"/>
<path d="M872.4 583.1 C874.4 583.7 881.0 583.7 884.8 586.6 C888.6 589.4 893.6 597.9 895.3 600.1"/>
<path d="M1171.0 465.4 C1173.8 462.5 1184.4 452.0 1188.0 447.9 C1191.6 443.9 1190.1 445.7 1192.8 441.0 C1195.5 436.4 1201.8 425.7 1204.0 420.0 C1206.3 414.2 1205.8 408.7 1206.2 406.5"/>
<path d="M1232.9 544.3 C1230.9 543.5 1224.5 542.3 1220.6 539.5 C1216.7 536.7 1213.7 531.1 1209.5 527.7 C1205.4 524.2 1199.1 521.6 1195.9 519.0 C1192.6 516.5 1190.9 513.4 1189.9 512.3"/>
<path d="M1302.9 427.7 C1300.7 425.0 1294.0 415.8 1289.5 411.1 C1285.0 406.4 1279.7 401.5 1275.9 399.5 C1272.2 397.6 1268.6 399.4 1267.1 399.4"/>
<path d="M950.3 620.7 C949.3 624.6 945.2 637.7 944.0 643.9 C942.9 650.1 943.5 655.6 943.4 657.9"/>
<path d="M1103.0 583.5 C1104.1 585.6 1106.8 592.2 1109.8 596.1 C1112.7 600.0 1118.6 603.2 1120.6 606.9 C1122.7 610.7 1121.5 614.1 1122.0 618.4 C1122.4 622.7 1123.1 630.1 1123.3 632.5"/>
<path d="M935.8 480.1 C934.6 478.2 931.2 471.5 928.7 468.7 C926.1 466.0 922.1 464.6 920.7 463.8"/>
<path d="M936.1 565.7 C937.6 566.1 940.0 566.2 945.1 568.3 C950.2 570.4 963.1 576.4 966.7 578.1"/>
<path d="M884.1 576.3 C882.9 578.5 877.4 583.3 876.5 589.4 C875.6 595.5 876.5 607.0 878.8 612.9 C881.0 618.8 888.1 622.9 889.9 624.9"/>
<path d="M1242.3 450.0 C1242.5 446.5 1244.6 434.5 1243.7 428.7 C1242.7 422.9 1237.7 417.3 1236.5 415.1"/>
<path d="M936.3 597.9 C933.9 599.8 925.6 605.2 922.1 609.8 C918.6 614.4 919.3 621.1 915.4 625.3 C911.4 629.5 901.1 633.4 898.2 635.1"/>
<path d="M1011.1 479.7 C1008.3 482.2 998.9 490.8 994.7 494.4 C990.6 498.0 987.6 500.3 986.2 501.4"/>
<path d="M1286.1 602.6 C1288.5 605.2 1297.7 613.2 1300.7 618.1 C1303.7 623.0 1304.1 626.0 1304.2 631.8 C1304.2 637.6 1301.4 649.2 1300.9 652.7"/>
<path d="M1178.4 560.5 C1178.9 557.3 1179.5 546.2 1181.1 541.3 C1182.8 536.4 1183.9 533.7 1188.3 531.0 C1192.7 528.4 1204.4 526.3 1207.6 525.3"/>
<path d="M1294.9 493.4 C1296.5 496.5 1301.7 507.4 1304.7 512.1 C1307.8 516.8 1311.7 520.0 1313.1 521.6"/>
<path d="M998.2 526.6 C996.2 524.1 989.4 517.9 986.1 512.0 C982.8 506.1 981.6 497.9 978.3 491.4 C975.0 484.8 968.2 475.7 966.2 472.6"/>
<path d="M1256.2 565.5 C1259.1 565.1 1267.2 565.8 1273.1 563.3 C1279.0 560.9 1285.8 552.9 1291.5 550.9 C1297.3 548.8 1304.9 551.1 1307.6 551.1"/>
<path d="M1177.0 572.0 C1177.1 568.0 1177.5 556.0 1177.9 548.1 C1178.3 540.1 1179.1 528.2 1179.3 524.2"/>
<path d="M1004.4 537.5 C1005.6 536.8 1009.1 536.1 1011.7 533.2 C1014.3 530.3 1017.3 523.7 1020.0 520.2 C1022.8 516.6 1026.8 513.2 1028.2 511.8"/>
<path d="M1174.6 553.6 C1175.6 555.0 1179.8 559.2 1181.0 562.3 C1182.2 565.4 1183.2 568.2 1181.9 572.1 C1180.6 576.1 1174.6 583.5 1173.1 585.8"/>
<path d="M1113.5 509.0 C1111.3 511.1 1104.4 516.0 1100.6 521.7 C1096.9 527.4 1092.0 537.0 1091.0 543.0 C1090.1 548.9 1093.0 552.8 1095.1 557.3 C1097.1 561.8 1102.0 567.7 1103.4 569.8"/>
<path d="M921.1 595.1 C919.5 596.5 914.4 600.0 911.3 603.8 C908.1 607.6 903.9 615.6 902.4 617.9"/>
<path d="M1292.3 483.7 C1290.5 486.8 1284.8 497.6 1281.4 502.6 C1278.0 507.5 1273.5 511.5 1271.9 513.3"/>
<path d="M933.1 546.4 C931.6 543.7 928.1 536.0 924.0 530.4 C920.0 524.8 911.2 515.9 908.7 513.0"/>
<path d="M870.4 445.3 C868.4 444.3 861.9 442.7 858.3 439.2 C854.7 435.8 852.9 430.2 848.7 424.5 C844.6 418.8 837.6 410.6 833.4 405.3 C829.1 400.0 824.8 394.9 823.1 392.8"/>
<path d="M1184.5 502.5 C1186.0 501.0 1189.1 495.5 1193.3 493.7 C1197.5 492.0 1206.9 492.3 1209.7 492.0"/>
<path d="M1054.5 489.1 C1056.0 489.9 1059.0 493.8 1063.6 494.1 C1068.3 494.4 1077.6 490.5 1082.6 490.9 C1087.6 491.3 1091.6 495.5 1093.4 496.5"/>
<path d="M887.7 451.2 C886.0 452.5 882.8 457.4 877.5 458.7 C872.3 460.0 861.7 458.3 856.3 459.2 C850.8 460.0 846.5 463.1 844.6 463.8"/>
<path d="M938.7 627.7 C936.4 629.3 931.1 635.3 924.9 637.3 C918.8 639.3 907.1 639.9 902.1 639.7 C897.0 639.5 898.0 636.5 894.6 636.1 C891.3 635.6 884.0 636.8 881.9 637.0"/>
<path d="M1184.4 550.0 C1184.0 547.7 1181.9 541.4 1182.0 536.1 C1182.1 530.8 1184.6 521.3 1185.1 518.3"/>
<path d="M886.2 475.3 C883.4 474.5 875.5 470.1 869.5 470.8 C863.5 471.4 853.3 477.9 850.1 479.4"/>
<path d="M1059.9 542.2 C1059.7 538.4 1057.8 525.8 1058.6 519.6 C1059.5 513.4 1062.0 510.0 1065.2 504.9 C1068.4 499.8 1073.3 492.6 1077.9 489.1 C1082.5 485.6 1090.4 484.8 1092.9 483.9"/>
<path d="M1206.6 485.9 C1209.8 486.3 1220.1 487.8 1225.5 488.4 C1230.8 489.1 1233.4 490.7 1238.7 489.7 C1244.0 488.7 1254.1 483.7 1257.2 482.5"/>
<path d="M1264.6 624.4 C1261.2 623.1 1249.5 617.6 1244.2 616.8 C1238.8 616.0 1238.0 619.9 1232.6 619.7 C1227.2 619.5 1215.1 616.1 1211.6 615.4"/>
<path d="M1164.6 428.3 C1166.3 425.4 1173.3 417.6 1174.6 411.0 C1175.8 404.5 1172.6 392.5 1172.2 388.8"/>
<path d="M967.3 556.7 C971.4 557.7 985.2 560.5 991.5 562.8 C997.7 565.2 1000.7 569.2 1004.7 570.7 C1008.8 572.2 1012.7 570.9 1015.8 571.8 C1019.0 572.7 1022.5 575.5 1023.8 576.3"/>
<path d="M964.6 538.0 C963.3 537.4 960.8 536.7 956.4 534.5 C952.0 532.2 942.3 527.5 938.4 524.4 C934.5 521.2 935.4 518.8 933.2 515.5 C931.0 512.2 926.7 506.5 925.4 504.7"/>
<path d="M1136.5 524.3 C1138.2 524.7 1142.0 526.3 1146.7 526.3 C1151.3 526.4 1159.2 524.6 1164.2 524.6 C1169.3 524.7 1174.9 526.3 1177.0 526.6"/>
<path d="M1288.2 536.8 C1288.5 538.9 1290.1 544.3 1289.6 549.1 C1289.2 553.8 1286.3 562.7 1285.7 565.4"/>
<path d="M929.4 471.5 C928.4 472.9 924.4 476.2 923.6 479.9 C922.8 483.6 924.4 490.0 924.5 493.7 C924.6 497.4 925.7 498.5 924.2 502.3 C922.8 506.1 917.1 514.2 915.7 516.5"/>
<path d="M1071.4 503.7 C1069.3 505.7 1063.1 512.1 1059.3 515.7 C1055.5 519.4 1054.2 522.8 1048.5 525.4 C1042.7 528.0 1029.0 530.1 1025.1 531.1"/>
<path d="M1060.6 587.4 C1062.6 584.9 1068.9 575.5 1072.4 572.2 C1075.9 568.8 1080.1 568.3 1081.7 567.5"/>
<path d="M1147.4 496.3 C1145.8 499.3 1141.2 509.4 1137.7 513.8 C1134.2 518.2 1130.3 520.3 1126.2 522.5 C1122.1 524.7 1115.1 526.4 1112.9 527.2"/>
<path d="M1001.4 553.7 C1004.3 553.0 1012.7 550.8 1019.0 549.7 C1025.4 548.6 1034.5 548.1 1039.5 547.3 C1044.4 546.4 1047.2 545.1 1048.8 544.7"/>
<path d="M884.7 464.9 C886.8 466.0 893.0 469.4 897.1 471.2 C901.2 473.1 905.1 471.9 909.3 476.0 C913.6 480.1 920.3 492.4 922.5 495.7"/>
<path d="M1013.5 518.6 C1015.3 520.2 1019.3 524.5 1024.3 528.2 C1029.3 531.8 1038.4 538.3 1043.7 540.5 C1048.9 542.7 1052.2 541.7 1055.9 541.4 C1059.7 541.2 1064.7 539.4 1066.4 539.0"/>
<path d="M997.5 471.7 C994.2 472.8 982.3 476.5 977.8 478.5 C973.3 480.4 971.6 482.6 970.3 483.5"/>
<path d="M879.7 517.5 C879.9 514.3 881.7 504.6 881.3 498.2 C880.9 491.8 877.9 482.4 877.2 479.2"/>
<path d="M1193.8 456.8 C1194.5 459.9 1196.9 468.5 1197.7 475.6 C1198.5 482.6 1198.5 495.1 1198.6 499.0"/>
<path d="M1183.8 563.9 C1186.0 566.4 1194.2 575.1 1197.2 579.3 C1200.2 583.5 1198.5 585.2 1201.5 589.2 C1204.5 593.1 1212.8 600.8 1215.1 603.1"/>
<path d="M1287.6 556.7 C1286.9 558.1 1286.2 561.8 1283.7 564.9 C1281.2 567.9 1275.0 570.4 1272.6 574.9 C1270.2 579.4 1269.8 589.1 1269.2 591.9"/>
<path d="M1309.4 530.4 C1307.8 531.6 1302.9 536.1 1299.7 537.6 C1296.6 539.1 1292.0 539.3 1290.4 539.7"/>
<path d="M1079.2 564.3 C1078.2 563.3 1076.1 560.2 1072.7 558.1 C1069.3 556.1 1062.8 553.3 1059.1 552.1 C1055.3 550.8 1051.7 551.0 1050.3 550.8"/>
<path d="M886.7 624.1 C887.2 625.9 886.7 630.0 889.4 635.0 C892.2 640.0 900.6 649.5 903.2 654.3 C905.9 659.1 905.7 660.4 905.3 663.6 C904.8 666.7 901.2 671.6 900.4 673.2"/>
<path d="M903.5 574.1 C901.7 572.1 895.8 566.0 892.6 562.0 C889.4 558.1 887.0 555.4 884.1 550.4 C881.2 545.4 876.6 535.2 875.1 532.2"/>
<path d="M1275.4 486.7 C1273.7 487.1 1270.4 487.8 1265.3 489.2 C1260.2 490.6 1248.2 493.9 1244.8 494.8"/>
<path d="M987.0 506.3 C989.0 506.8 994.4 509.7 998.8 509.3 C1003.1 509.0 1008.8 505.6 1013.2 504.3 C1017.6 503.0 1020.9 504.5 1025.1 501.6 C1029.3 498.7 1036.2 489.2 1038.4 486.8"/>
<path d="M891.3 464.4 C890.3 465.5 888.2 468.9 884.9 471.0 C881.7 473.1 875.3 476.0 871.8 477.0 C868.3 478.1 865.1 477.4 863.8 477.4"/>
<path d="M996.9 617.6 C999.6 620.1 1008.0 626.7 1013.0 632.5 C1018.0 638.3 1024.6 649.1 1026.9 652.4"/>
<path d="M1193.2 568.1 C1192.8 570.3 1190.9 577.4 1190.6 581.3 C1190.3 585.3 1191.1 587.7 1191.4 591.7 C1191.7 595.6 1192.2 602.9 1192.4 605.1"/>
<path d="M885.1 535.3 C884.1 534.2 882.4 530.5 879.2 528.7 C876.0 526.9 868.0 525.0 865.8 524.3"/>
<path d="M1251.8 619.5 C1250.5 618.3 1247.7 614.5 1244.3 612.7 C1240.8 610.8 1233.1 608.9 1230.9 608.2"/>
<path d="M942.5 551.2 C944.8 553.1 953.1 559.7 956.5 563.0 C959.9 566.3 962.0 569.7 963.1 571.0"/>
<path d="M1209.5 513.0 C1206.5 515.5 1196.4 523.9 1191.5 528.1 C1186.6 532.4 1184.5 534.3 1180.3 538.7 C1176.1 543.0 1168.6 551.7 1166.2 554.3"/>
<path d="M1285.7 533.2 C1286.8 531.9 1288.0 527.9 1292.1 525.3 C1296.2 522.8 1306.3 519.9 1310.2 517.7 C1314.1 515.4 1312.9 513.3 1315.7 511.9 C1318.6 510.4 1325.4 509.5 1327.4 509.0"/>
<path d="M1183.0 496.3 C1181.4 497.3 1177.0 500.2 1173.2 502.2 C1169.5 504.2 1162.7 507.3 1160.6 508.3"/>
<path d="M1203.5 473.0 C1200.6 474.5 1190.8 480.7 1186.5 482.1 C1182.2 483.5 1179.0 481.5 1177.5 481.4"/>
<path d="M733.5 495.3 C734.4 496.4 736.6 500.2 739.0 502.0 C741.4 503.7 746.3 505.2 747.8 505.9"/>
<path d="M793.8 609.3 C794.7 611.8 797.9 620.3 799.3 624.4 C800.7 628.4 799.5 629.5 802.1 633.5 C804.8 637.4 813.0 645.8 815.2 648.2"/>
<path d="M628.0 548.3 C624.7 548.0 614.5 547.5 608.5 546.6 C602.6 545.6 597.8 543.9 592.3 542.5 C586.8 541.2 578.3 539.0 575.5 538.3"/>
<path d="M786.5 516.1 C788.9 513.9 796.1 506.3 801.0 502.7 C805.9 499.1 811.2 496.0 816.0 494.4 C820.9 492.8 824.5 493.3 830.1 493.2 C835.7 493.1 846.4 493.9 849.7 494.0"/>
<path d="M741.0 481.8 C743.0 484.2 750.1 489.6 752.8 495.9 C755.6 502.2 756.6 515.5 757.4 519.5"/>
<path d="M711.5 623.5 C712.9 623.1 715.8 624.6 719.8 621.1 C723.9 617.6 732.1 607.9 735.8 602.7 C739.4 597.5 737.7 594.7 741.7 590.0 C745.6 585.3 756.7 577.0 759.7 574.4"/>
<path d="M763.5 539.3 C761.7 538.5 755.8 537.6 752.7 534.1 C749.6 530.7 746.3 521.2 745.0 518.7"/>
<path d="M706.2 423.6 C703.6 424.6 695.3 426.1 690.2 429.3 C685.2 432.4 678.3 440.4 675.9 442.6"/>
<path d="M686.8 490.1 C689.9 487.4 701.4 477.9 705.3 473.7 C709.1 469.6 708.4 470.1 709.9 465.2 C711.4 460.2 712.7 448.9 714.3 444.1 C715.9 439.3 718.8 437.8 719.7 436.5"/>
<path d="M856.6 438.9 C855.7 440.1 854.6 442.2 851.2 446.2 C847.9 450.1 838.9 459.9 836.5 462.6"/>
<path d="M837.2 573.7 C834.6 575.3 825.9 579.6 821.7 583.1 C817.6 586.7 814.3 589.2 812.4 595.0 C810.5 600.8 810.8 614.2 810.5 618.1"/>
<path d="M689.3 510.3 C690.9 512.9 695.6 522.3 698.8 525.9 C701.9 529.5 704.2 529.0 708.2 532.1 C712.1 535.2 720.1 542.5 722.5 544.5"/>
<path d="M786.4 573.9 C789.1 573.5 798.9 573.4 803.1 571.8 C807.3 570.3 808.3 567.4 811.5 564.4 C814.7 561.5 820.2 556.1 822.0 554.4"/>
<path d="M843.5 607.9 C843.0 606.7 841.3 603.3 840.6 600.5 C839.9 597.6 840.4 594.5 839.3 590.7 C838.2 586.8 835.1 579.5 834.3 577.3"/>
<path d="M805.3 542.0 C801.7 541.8 791.0 542.2 783.7 540.5 C776.4 538.8 766.9 536.0 761.6 531.9 C756.3 527.8 753.3 518.8 751.7 516.1"/>
<path d="M860.6 444.4 C862.8 444.9 867.8 447.8 873.8 447.3 C879.7 446.9 892.5 442.8 896.3 441.9"/>
<path d="M866.7 581.4 C866.8 582.8 869.5 584.8 867.3 589.5 C865.1 594.2 856.0 604.9 853.6 609.6 C851.2 614.3 852.9 614.0 852.9 617.7 C853.0 621.3 853.9 629.1 854.1 631.4"/>
<path d="M800.5 524.6 C801.7 523.5 805.2 520.9 808.2 518.3 C811.3 515.7 813.4 512.1 818.8 509.1 C824.3 506.2 835.3 503.0 840.8 500.4 C846.3 497.9 850.0 494.9 851.9 493.8"/>
<path d="M734.7 567.3 C733.9 564.9 730.5 556.8 730.2 553.0 C729.9 549.2 732.1 547.7 733.0 544.4 C733.9 541.0 733.5 536.1 735.6 532.9 C737.7 529.7 743.9 526.4 745.5 525.1"/>
<path d="M794.4 453.2 C798.4 452.2 812.0 448.7 818.4 447.3 C824.8 445.9 828.9 444.5 832.8 444.7 C836.6 444.9 836.5 447.2 841.5 448.7 C846.5 450.1 859.2 452.7 862.7 453.5"/>
<path d="M601.4 581.5 C601.3 584.5 603.3 593.2 600.9 599.1 C598.5 605.0 589.2 614.0 586.9 617.0"/>
<path d="M621.2 624.1 C623.6 625.5 632.1 628.5 635.7 632.7 C639.2 636.9 641.7 644.0 642.7 649.4 C643.7 654.9 641.7 662.7 641.5 665.4"/>
<path d="M606.1 456.1 C606.2 453.1 604.8 443.7 606.7 438.0 C608.6 432.4 614.7 426.0 617.5 422.4 C620.3 418.8 622.1 420.8 623.6 416.3 C625.0 411.8 625.8 398.9 626.2 395.4"/>
<path d="M711.6 604.0 C710.8 600.4 709.3 587.9 707.1 582.6 C704.9 577.2 701.5 574.7 698.5 571.8 C695.6 568.9 690.9 566.3 689.4 565.3"/>
<path d="M825.2 438.9 C824.0 440.6 820.2 445.5 817.7 449.0 C815.3 452.5 812.9 456.7 810.5 459.6 C808.0 462.5 804.3 465.3 803.0 466.4"/>
<path d="M173.0 517.7 C175.4 517.3 182.8 517.4 187.7 515.0 C192.6 512.5 197.5 505.9 202.5 503.1 C207.6 500.2 215.4 498.6 218.0 497.8"/>
<path d="M249.3 517.8 C245.6 516.3 232.6 509.8 227.1 508.8 C221.6 507.8 218.2 511.3 216.4 511.8"/>
<path d="M306.5 478.2 C306.1 476.3 306.3 472.1 304.1 466.8 C301.8 461.5 294.7 452.7 293.0 446.4 C291.3 440.1 293.7 431.9 293.8 429.0"/>
<path d="M231.8 444.9 C230.0 446.9 225.7 452.1 220.8 456.7 C215.8 461.3 206.7 467.2 202.1 472.4 C197.6 477.6 195.0 485.3 193.6 487.9"/>
<path d="M221.2 535.9 C219.7 533.0 214.9 522.3 212.2 518.8 C209.5 515.4 206.0 515.7 204.8 515.1"/>
<path d="M194.6 471.1 C194.9 469.6 195.8 465.2 196.4 462.3 C196.9 459.5 197.8 455.3 198.0 453.8"/>
<path d="M284.1 494.6 C285.8 494.7 288.8 496.8 293.9 495.1 C299.0 493.3 309.2 486.9 314.7 484.3 C320.1 481.7 324.5 480.4 326.4 479.6"/>
<path d="M385.7 546.0 C384.7 547.5 382.0 552.9 379.6 554.9 C377.1 557.0 375.4 556.2 370.8 558.2 C366.3 560.2 355.3 565.4 352.2 566.8"/>
<path d="M357.8 503.5 C360.2 503.4 367.1 503.5 372.1 503.0 C377.1 502.5 384.1 501.8 387.7 500.5 C391.2 499.1 392.5 495.8 393.4 494.9"/>
<path d="M376.3 540.3 C378.5 539.6 384.4 539.8 389.4 536.1 C394.4 532.4 402.6 523.3 406.3 518.4 C409.9 513.5 408.1 511.1 411.5 506.8 C414.9 502.6 424.2 495.2 426.7 492.9"/>
<path d="M220.7 594.6 C217.3 593.5 206.3 590.7 200.4 587.9 C194.5 585.1 189.7 582.9 185.5 577.6 C181.4 572.4 177.1 559.9 175.4 556.3"/>
<path d="M515.9 545.9 C514.2 545.6 510.9 544.7 506.0 543.9 C501.1 543.0 492.8 542.4 486.4 541.0 C480.1 539.5 472.2 536.8 467.8 535.2 C463.5 533.5 461.7 531.8 460.5 531.1"/>
<path d="M297.5 508.4 C295.6 507.7 289.2 506.4 286.4 504.4 C283.7 502.3 284.9 498.7 280.9 496.1 C276.9 493.6 265.7 490.2 262.6 489.1"/>
<path d="M133.7 436.8 C130.9 437.5 123.6 440.9 116.9 440.5 C110.2 440.1 99.2 436.4 93.4 434.3 C87.7 432.3 86.3 430.0 82.4 428.2 C78.5 426.3 72.2 424.1 70.1 423.3"/>
<path d="M319.1 484.9 C321.9 482.3 332.1 473.0 336.3 469.1 C340.4 465.2 341.7 464.8 343.7 461.6 C345.8 458.4 347.6 451.9 348.4 450.0"/>
<path d="M572.6 465.5 C573.6 468.5 576.5 477.8 578.7 483.4 C580.8 488.9 583.3 494.6 585.4 498.8 C587.5 502.9 590.4 506.8 591.4 508.4"/>
<path d="M556.4 458.1 C555.0 458.4 552.4 458.7 548.3 459.8 C544.1 461.0 538.1 463.0 531.5 465.0 C524.8 467.1 513.7 469.6 508.3 472.1 C502.9 474.5 500.6 478.5 499.0 479.8"/>
<path d="M172.4 537.3 C172.9 538.9 173.3 543.3 175.1 546.8 C177.0 550.3 181.8 554.2 183.3 558.2 C184.8 562.2 184.1 568.6 184.2 570.7"/>
</g>
<g fill="#a3d3f6">
<path d="M834.5 446.0 C835.8 444.7 839.4 440.2 842.0 438.0 C844.6 435.8 847.4 434.3 850.0 433.0 C852.6 431.7 856.7 429.5 857.5 430.0 C858.3 430.5 856.9 434.0 855.0 436.0 C853.1 438.0 848.8 440.0 846.0 442.0 C843.2 444.0 839.3 447.0 838.0 448.0 Z"/>
<path d="M723.0 444.0 C724.2 443.5 726.7 441.2 730.0 441.0 C733.3 440.8 741.6 442.2 742.6 443.0 C743.6 443.8 738.8 445.3 736.0 446.0 C733.2 446.7 727.7 446.8 726.0 447.0 Z"/>
<path d="M1040.0 566.0 C1042.5 564.8 1049.2 560.7 1055.0 559.0 C1060.8 557.3 1069.2 556.2 1075.0 556.0 C1080.8 555.8 1088.3 556.3 1090.0 558.0 C1091.7 559.7 1089.2 563.8 1085.0 566.0 C1080.8 568.2 1071.2 570.0 1065.0 571.0 C1058.8 572.0 1050.8 571.8 1048.0 572.0 Z"/>
<path d="M773.8 570.0 C774.5 569.1 776.4 565.2 778.0 564.5 C779.6 563.8 783.1 564.4 783.6 566.0 C784.1 567.6 782.4 572.9 781.0 574.4 C779.6 575.9 776.0 574.9 775.0 575.0 Z"/>
<path d="M1212.0 462.0 C1213.3 460.7 1217.3 455.8 1220.0 454.0 C1222.7 452.2 1227.3 450.0 1228.0 451.0 C1228.7 452.0 1226.0 457.5 1224.0 460.0 C1222.0 462.5 1217.3 465.0 1216.0 466.0 Z"/>
<path d="M1100.0 431.0 C1101.0 430.7 1104.3 428.8 1106.0 429.0 C1107.7 429.2 1110.3 431.0 1110.0 432.0 C1109.7 433.0 1105.0 434.5 1104.0 435.0 Z"/>
<path d="M932.0 475.0 C932.7 473.8 934.8 468.8 936.0 468.0 C937.2 467.2 939.0 468.3 939.0 470.0 C939.0 471.7 936.5 476.7 936.0 478.0 Z"/>
<path d="M547.0 472.0 C547.7 471.7 549.5 469.2 551.0 470.0 C552.5 470.8 555.3 475.0 556.0 477.0 C556.7 479.0 556.2 481.5 555.0 482.0 C553.8 482.5 550.0 480.3 549.0 480.0 Z"/>
<path d="M676.0 518.0 C677.2 517.5 681.0 514.8 683.0 515.0 C685.0 515.2 687.8 517.5 688.0 519.0 C688.2 520.5 685.5 523.2 684.0 524.0 C682.5 524.8 679.8 524.0 679.0 524.0 Z"/>
<path d="M684.0 526.0 C685.3 525.3 689.7 521.8 692.0 522.0 C694.3 522.2 696.7 525.0 698.0 527.0 C699.3 529.0 700.5 532.2 700.0 534.0 C699.5 535.8 697.0 538.0 695.0 538.0 C693.0 538.0 689.2 534.7 688.0 534.0 Z"/>
<path d="M689.0 512.0 C690.2 511.7 694.3 509.5 696.0 510.0 C697.7 510.5 699.3 513.7 699.0 515.0 C698.7 516.3 694.8 517.5 694.0 518.0 Z"/>
</g>
<path d="M549.0 456.0 C548.8 457.7 547.5 463.0 548.0 466.0 C548.5 469.0 550.3 471.5 552.0 474.0 C553.7 476.5 555.7 479.8 558.0 481.0 C560.3 482.2 562.3 481.0 566.0 481.0 C569.7 481.0 574.7 480.8 580.0 481.0 C585.3 481.2 592.8 482.0 597.6 482.0 C602.4 482.0 606.0 479.6 608.8 481.0 C611.6 482.4 611.3 488.4 614.4 490.2 C617.5 492.0 624.9 490.1 627.4 492.0 C629.9 493.9 627.1 499.2 629.3 501.4 C631.5 503.6 637.9 503.1 640.4 505.0 C642.9 506.9 642.5 510.3 644.1 512.5 C645.7 514.7 650.1 516.5 649.7 518.1 C649.4 519.7 642.6 520.5 642.0 522.0 C641.4 523.5 644.2 526.7 646.0 527.0 C647.8 527.3 650.3 525.2 653.0 524.0 C655.7 522.8 658.8 521.0 662.0 520.0 C665.2 519.0 669.0 518.0 672.0 518.0 C675.0 518.0 678.7 519.7 680.0 520.0" fill="none" stroke="#a3d3f6" stroke-width="1.6"/>
<path d="M690.0 540.0 C691.7 540.8 696.3 544.0 700.0 545.0 C703.7 546.0 708.0 545.5 712.0 546.0 C716.0 546.5 722.0 547.7 724.0 548.0" fill="none" stroke="#a3d3f6" stroke-width="1.4"/>
<path d="M672.0 522.0 C673.3 521.8 677.3 520.0 680.0 521.0 C682.7 522.0 685.5 526.3 688.0 528.0 C690.5 529.7 693.8 530.5 695.0 531.0" fill="none" stroke="#a3d3f6" stroke-width="2.5"/>
<path d="M694.0 520.0 C695.3 519.3 700.0 518.0 702.0 516.0 C704.0 514.0 705.3 509.3 706.0 508.0" fill="none" stroke="#a3d3f6" stroke-width="1.6"/>
<g fill="none" stroke="#fbda80" stroke-width="2.5" stroke-linecap="round" stroke-linejoin="round">
<path d="M156.7 423.0 C156.5 427.5 155.8 442.2 155.5 450.0 C155.2 457.8 154.6 463.3 155.0 470.0 C155.4 476.7 157.4 485.0 158.0 490.0 C158.6 495.0 158.4 498.3 158.5 500.0"/>
<path d="M86.0 508.0 C88.3 507.2 94.3 505.3 100.0 503.0 C105.7 500.7 113.8 495.7 120.0 494.0 C126.2 492.3 130.3 492.0 137.0 493.0 C143.7 494.0 154.5 496.8 160.0 500.0 C165.5 503.2 166.7 507.5 170.0 512.0 C173.3 516.5 174.2 522.7 180.0 527.0 C185.8 531.3 199.5 534.2 205.0 538.0 C210.5 541.8 209.3 544.7 213.0 550.0 C216.7 555.3 220.8 564.2 227.0 570.0 C233.2 575.8 241.2 580.0 250.0 585.0 C258.8 590.0 270.8 595.8 280.0 600.0 C289.2 604.2 299.3 605.8 305.0 610.0 C310.7 614.2 312.2 621.3 314.0 625.0 C315.8 628.7 315.7 630.8 316.0 632.0"/>
<path d="M158.5 500.0 C162.1 499.2 173.4 498.7 180.0 495.0 C186.6 491.3 193.3 483.5 198.0 478.0 C202.7 472.5 204.7 468.3 208.0 462.0 C211.3 455.7 213.5 446.5 218.0 440.0 C222.5 433.5 232.2 425.8 235.0 423.0"/>
<path d="M175.0 533.0 C175.2 537.5 176.8 551.3 176.0 560.0 C175.2 568.7 172.3 579.2 170.0 585.0 C167.7 590.8 162.8 590.5 162.0 595.0 C161.2 599.5 162.8 605.8 165.0 612.0 C167.2 618.2 173.3 628.7 175.0 632.0"/>
<path d="M150.0 505.0 C147.5 508.8 139.7 522.7 135.0 528.0 C130.3 533.3 125.0 532.5 122.0 537.0 C119.0 541.5 118.2 549.5 117.0 555.0 C115.8 560.5 117.8 565.0 115.0 570.0 C112.2 575.0 104.8 580.8 100.0 585.0 C95.2 589.2 88.3 593.3 86.0 595.0"/>
<path d="M228.0 571.0 C235.8 570.8 255.3 570.2 275.0 570.0 C294.7 569.8 328.5 569.7 346.0 570.0 C363.5 570.3 368.0 570.8 380.0 572.0 C392.0 573.2 411.7 576.2 418.0 577.0"/>
<path d="M200.0 632.0 C206.7 628.8 228.3 617.2 240.0 613.0 C251.7 608.8 260.0 607.8 270.0 607.0 C280.0 606.2 295.0 607.8 300.0 608.0"/>
<path d="M316.0 423.0 C321.5 427.7 339.7 443.3 349.0 451.0 C358.3 458.7 367.6 459.9 372.0 469.0 C376.4 478.1 373.3 495.0 375.5 505.5 C377.7 516.0 381.2 524.1 385.3 531.8 C389.4 539.5 394.9 544.4 400.0 551.6 C405.1 558.8 413.3 571.1 416.0 575.0"/>
<path d="M329.0 423.5 L400.0 423.5"/>
<path d="M470.0 423.0 C469.0 427.5 465.3 438.8 464.0 450.0 C462.7 461.2 463.5 478.3 462.0 490.0 C460.5 501.7 458.7 510.3 455.0 520.0 C451.3 529.7 446.2 538.8 440.0 548.0 C433.8 557.2 421.7 570.5 418.0 575.0"/>
<path d="M416.0 575.0 C415.5 579.2 414.8 590.5 413.0 600.0 C411.2 609.5 406.3 626.7 405.0 632.0"/>
<path d="M416.0 575.0 C412.5 578.3 400.3 590.3 395.0 595.0 C389.7 599.7 385.8 601.7 384.0 603.0"/>
<path d="M418.0 577.0 C421.7 579.2 431.3 586.8 440.0 590.0 C448.7 593.2 455.0 596.8 470.0 596.0 C485.0 595.2 515.8 587.7 530.0 585.0 C544.2 582.3 550.8 580.8 555.0 580.0"/>
<path d="M475.0 423.0 C478.3 424.2 490.0 427.2 495.0 430.0 C500.0 432.8 501.7 435.0 505.0 440.0 C508.3 445.0 510.8 453.3 515.0 460.0 C519.2 466.7 525.0 474.2 530.0 480.0 C535.0 485.8 536.7 491.7 545.0 495.0 C553.3 498.3 567.5 497.8 580.0 500.0 C592.5 502.2 610.0 502.2 620.0 508.0 C630.0 513.8 634.2 528.8 640.0 535.0 C645.8 541.2 648.3 540.8 655.0 545.0 C661.7 549.2 672.5 555.0 680.0 560.0 C687.5 565.0 696.7 572.5 700.0 575.0"/>
<path d="M600.0 423.0 C598.3 429.2 593.7 447.2 590.0 460.0 C586.3 472.8 583.0 486.7 578.0 500.0 C573.0 513.3 564.2 526.7 560.0 540.0 C555.8 553.3 553.8 570.0 553.0 580.0 C552.2 590.0 555.5 591.3 555.0 600.0 C554.5 608.7 550.8 626.7 550.0 632.0"/>
<path d="M555.0 597.0 C559.2 597.5 569.2 599.5 580.0 600.0 C590.8 600.5 606.7 600.8 620.0 600.0 C633.3 599.2 646.7 597.5 660.0 595.0 C673.3 592.5 689.2 587.0 700.0 585.0 C710.8 583.0 720.8 583.3 725.0 583.0"/>
<path d="M518.0 423.5 L545.0 423.5"/>
<path d="M765.6 423.3 C764.5 428.2 760.8 443.4 759.0 452.9 C757.2 462.3 755.2 470.4 755.0 480.0 C754.8 489.6 757.2 500.8 757.7 510.6 C758.2 520.4 758.9 530.8 757.7 539.0 C756.5 547.2 753.0 553.3 750.6 560.0 C748.2 566.7 746.0 572.7 743.6 579.0 C741.2 585.3 739.6 588.9 736.5 597.7 C733.4 606.5 726.7 626.3 724.7 632.0"/>
<path d="M785.3 462.7 C785.0 467.9 783.9 483.3 783.6 494.0 C783.3 504.7 782.8 516.0 783.6 527.0 C784.4 538.0 789.1 550.2 788.3 560.0 C787.5 569.8 782.1 578.5 779.0 586.0 C775.9 593.5 772.3 597.1 769.5 604.8 C766.7 612.5 763.6 627.5 762.4 632.0"/>
<path d="M690.0 508.0 C695.4 508.4 711.6 510.3 722.4 510.6 C733.2 510.9 744.8 510.4 755.0 510.0 C765.2 509.6 776.1 511.0 783.6 508.0 C791.1 505.0 794.8 496.3 800.0 492.0 C805.2 487.7 807.3 484.7 814.8 482.4 C822.3 480.1 834.1 480.1 845.0 478.0 C855.9 475.9 867.5 473.3 880.0 470.0 C892.5 466.7 908.3 462.2 920.0 458.0 C931.7 453.8 940.0 449.3 950.0 445.0 C960.0 440.7 970.0 435.7 980.0 432.0 C990.0 428.3 1005.0 424.5 1010.0 423.0"/>
<path d="M690.0 454.5 C693.3 454.5 698.8 454.5 709.7 454.5 C720.7 454.5 740.9 454.8 755.7 454.5 C770.5 454.2 786.4 454.0 798.4 452.9 C810.4 451.8 823.1 448.8 828.0 448.0"/>
<path d="M824.7 423.3 C825.2 428.2 826.4 442.5 828.0 452.9 C829.6 463.3 832.6 474.8 834.5 485.7 C836.4 496.6 837.3 507.7 839.5 518.6 C841.7 529.6 844.7 541.5 847.7 551.4 C850.7 561.2 855.3 564.3 857.5 577.7 C859.7 591.1 860.2 623.0 860.8 632.0"/>
<path d="M748.3 557.7 C754.6 557.3 772.4 556.5 786.0 555.3 C799.6 554.1 819.7 550.4 830.0 550.6 C840.3 550.8 841.0 553.1 847.7 556.3 C854.4 559.5 862.1 564.4 870.0 570.0 C877.9 575.6 887.5 585.3 895.0 590.0 C902.5 594.7 906.7 595.5 915.0 598.0 C923.3 600.5 935.0 603.0 945.0 605.0 C955.0 607.0 964.2 608.0 975.0 610.0 C985.8 612.0 999.2 615.7 1010.0 617.0 C1020.8 618.3 1030.8 619.2 1040.0 618.0 C1049.2 616.8 1055.0 611.8 1065.0 610.0 C1075.0 608.2 1089.2 606.7 1100.0 607.0 C1110.8 607.3 1125.0 611.2 1130.0 612.0"/>
<path d="M680.0 564.8 C683.1 567.9 692.1 578.9 698.8 583.6 C705.5 588.3 711.4 590.6 720.0 593.0 C728.6 595.4 739.2 595.7 750.6 597.7 C762.0 599.7 775.1 600.1 788.3 604.8 C801.5 609.5 821.7 621.5 830.0 626.0 C838.3 630.5 836.7 631.0 838.0 632.0"/>
<path d="M720.0 501.0 C721.6 504.6 726.2 516.1 729.4 522.4 C732.5 528.7 736.1 533.5 738.9 538.9 C741.7 544.3 743.6 550.7 746.0 555.0 C748.4 559.3 750.7 559.0 753.0 564.8 C755.3 570.6 759.3 578.8 760.0 590.0 C760.7 601.2 757.5 625.0 757.0 632.0"/>
<path d="M733.0 515.0 C732.7 520.0 733.5 535.9 731.0 545.0 C728.5 554.1 720.3 563.5 717.7 569.5 C715.1 575.5 717.2 575.5 715.3 581.0 C713.3 586.5 709.1 596.1 706.0 602.4 C702.9 608.7 699.2 614.1 696.5 619.0 C693.8 623.9 691.1 629.8 690.0 632.0"/>
<path d="M700.0 423.0 C701.7 425.8 707.0 432.2 710.0 440.0 C713.0 447.8 716.3 459.8 718.0 470.0 C719.7 480.2 719.7 495.8 720.0 501.0"/>
<path d="M752.0 423.0 L765.0 440.0"/>
<path d="M655.0 423.0 C657.5 424.5 665.1 428.7 670.0 432.0 C674.9 435.3 680.9 439.7 684.6 443.0 C688.3 446.3 690.8 450.5 692.0 452.0"/>
<path d="M956.0 423.0 C955.5 429.2 954.0 448.8 953.0 460.0 C952.0 471.2 950.0 481.7 950.0 490.0 C950.0 498.3 952.2 501.7 953.0 510.0 C953.8 518.3 953.5 531.7 955.0 540.0 C956.5 548.3 959.8 551.7 962.0 560.0 C964.2 568.3 966.3 578.0 968.0 590.0 C969.7 602.0 971.3 625.0 972.0 632.0"/>
<path d="M1100.0 452.0 C1097.5 453.0 1091.7 455.0 1085.0 458.0 C1078.3 461.0 1067.5 465.0 1060.0 470.0 C1052.5 475.0 1047.5 479.7 1040.0 488.0 C1032.5 496.3 1021.7 512.2 1015.0 520.0 C1008.3 527.8 1005.8 529.2 1000.0 535.0 C994.2 540.8 985.8 549.2 980.0 555.0 C974.2 560.8 969.2 565.0 965.0 570.0 C960.8 575.0 960.0 580.8 955.0 585.0 C950.0 589.2 941.7 592.8 935.0 595.0 C928.3 597.2 918.3 597.5 915.0 598.0"/>
<path d="M980.0 423.0 C983.3 426.7 993.3 437.2 1000.0 445.0 C1006.7 452.8 1013.3 462.5 1020.0 470.0 C1026.7 477.5 1034.2 482.5 1040.0 490.0 C1045.8 497.5 1048.3 506.7 1055.0 515.0 C1061.7 523.3 1073.3 531.7 1080.0 540.0 C1086.7 548.3 1090.0 555.0 1095.0 565.0 C1100.0 575.0 1105.0 588.8 1110.0 600.0 C1115.0 611.2 1122.5 626.7 1125.0 632.0"/>
<path d="M970.0 530.0 C973.3 528.3 985.0 522.2 990.0 520.0 C995.0 517.8 997.0 516.2 1000.0 517.0 C1003.0 517.8 1006.7 523.7 1008.0 525.0"/>
<path d="M862.0 632.0 C861.3 625.0 860.0 602.0 858.0 590.0 C856.0 578.0 851.3 565.0 850.0 560.0"/>
<path d="M905.0 600.0 C900.8 603.3 885.8 614.7 880.0 620.0 C874.2 625.3 871.7 630.0 870.0 632.0"/>
<path d="M1130.0 423.0 C1132.5 426.7 1140.0 438.0 1145.0 445.0 C1150.0 452.0 1155.0 458.3 1160.0 465.0 C1165.0 471.7 1170.0 478.3 1175.0 485.0 C1180.0 491.7 1185.0 498.3 1190.0 505.0 C1195.0 511.7 1200.3 519.2 1205.0 525.0 C1209.7 530.8 1215.2 533.3 1218.0 540.0 C1220.8 546.7 1221.3 555.0 1222.0 565.0 C1222.7 575.0 1222.3 588.8 1222.0 600.0 C1221.7 611.2 1220.3 626.7 1220.0 632.0"/>
<path d="M1086.0 455.0 C1090.0 454.5 1102.7 454.5 1110.0 452.0 C1117.3 449.5 1125.0 444.8 1130.0 440.0 C1135.0 435.2 1138.3 425.8 1140.0 423.0"/>
<path d="M1160.0 466.0 C1170.0 466.7 1203.0 469.3 1220.0 470.0 C1237.0 470.7 1251.2 472.5 1262.0 470.0 C1272.8 467.5 1276.3 460.0 1285.0 455.0 C1293.7 450.0 1309.2 442.5 1314.0 440.0"/>
<path d="M1085.0 470.0 C1089.2 473.3 1102.5 483.3 1110.0 490.0 C1117.5 496.7 1125.8 501.7 1130.0 510.0 C1134.2 518.3 1133.3 528.3 1135.0 540.0 C1136.7 551.7 1140.0 564.7 1140.0 580.0 C1140.0 595.3 1135.8 623.3 1135.0 632.0"/>
<path d="M1125.0 610.0 C1128.3 607.5 1136.7 601.7 1145.0 595.0 C1153.3 588.3 1166.7 577.5 1175.0 570.0 C1183.3 562.5 1188.3 555.0 1195.0 550.0 C1201.7 545.0 1206.7 540.3 1215.0 540.0 C1223.3 539.7 1235.8 545.5 1245.0 548.0 C1254.2 550.5 1258.5 553.0 1270.0 555.0 C1281.5 557.0 1306.7 559.2 1314.0 560.0"/>
<path d="M1130.0 612.0 C1135.0 614.2 1148.3 622.3 1160.0 625.0 C1171.7 627.7 1190.0 628.0 1200.0 628.0 C1210.0 628.0 1216.7 625.5 1220.0 625.0"/>
</g>
<path d="M151.8 426.7 Q154.3 425.7 157.7 426.9 Q161.1 425.7 163.6 426.7 L164.0 428.5 L164.0 432.1 Q164.0 436.3 157.7 437.5 Q151.3 436.3 151.3 432.1 L151.3 428.5 Z" fill="#fff" stroke="#5a5a5a" stroke-width="1"/><text x="157.7" y="434.1" class="sh">83</text>
<path d="M102.7 496.7 Q108.4 495.2 114.2 496.7 L114.2 502.8 Q114.2 507.2 108.4 508.7 Q102.7 507.2 102.7 502.8 Z" fill="#2f67b9" stroke="#fff" stroke-width="0.8"/><rect x="103.5" y="496.1" width="9.9" height="2.4" fill="#e0413d"/><text x="108.4" y="505.8" class="shi">10</text>
<path d="M198.7 537.9 Q204.4 536.4 210.2 537.9 L210.2 544.0 Q210.2 548.4 204.4 549.9 Q198.7 548.4 198.7 544.0 Z" fill="#2f67b9" stroke="#fff" stroke-width="0.8"/><rect x="199.5" y="537.3" width="9.9" height="2.4" fill="#e0413d"/><text x="204.4" y="547.0" class="shi">10</text>
<path d="M169.6 541.2 Q172.1 540.2 175.5 541.4 Q178.9 540.2 181.4 541.2 L181.8 543.0 L181.8 546.6 Q181.8 550.8 175.5 552.0 Q169.2 550.8 169.2 546.6 L169.2 543.0 Z" fill="#fff" stroke="#5a5a5a" stroke-width="1"/><text x="175.5" y="548.6" class="sh">83</text>
<path d="M92.3 583.0 Q95.7 582.0 99.8 583.2 Q103.9 582.0 107.2 583.0 L107.6 584.8 L107.6 588.4 Q107.6 592.6 99.8 593.8 Q92.0 592.6 92.0 588.4 L92.0 584.8 Z" fill="#fff" stroke="#5a5a5a" stroke-width="1"/><text x="99.8" y="590.4" class="sh">377</text>
<path d="M253.6 565.5 Q256.9 564.5 261.0 565.7 Q265.1 564.5 268.4 565.5 L268.9 567.3 L268.9 570.9 Q268.9 575.1 261.0 576.3 Q253.2 575.1 253.2 570.9 L253.2 567.3 Z" fill="#fff" stroke="#5a5a5a" stroke-width="1"/><text x="261.0" y="572.9" class="sh">290</text>
<path d="M349.8 453.7 Q352.3 452.7 355.7 453.9 Q359.1 452.7 361.6 453.7 L362.1 455.5 L362.1 459.1 Q362.1 463.3 355.7 464.5 Q349.3 463.3 349.3 459.1 L349.3 455.5 Z" fill="#fff" stroke="#5a5a5a" stroke-width="1"/><text x="355.7" y="461.1" class="sh">87</text>
<path d="M169.6 619.2 Q172.1 618.2 175.5 619.4 Q178.9 618.2 181.4 619.2 L181.8 621.0 L181.8 624.6 Q181.8 628.8 175.5 630.0 Q169.2 628.8 169.2 624.6 L169.2 621.0 Z" fill="#fff" stroke="#5a5a5a" stroke-width="1"/><text x="175.5" y="626.6" class="sh">83</text>
<path d="M311.6 621.1 Q317.3 619.6 323.1 621.1 L323.1 627.2 Q323.1 631.6 317.3 633.1 Q311.6 631.6 311.6 627.2 Z" fill="#2f67b9" stroke="#fff" stroke-width="0.8"/><rect x="312.4" y="620.5" width="9.9" height="2.4" fill="#e0413d"/><text x="317.3" y="630.2" class="shi">10</text>
<rect x="378.6" y="594.6" width="12.5" height="11" rx="5" fill="#fff" stroke="#5a5a5a" stroke-width="1"/><text x="384.9" y="602.7" class="sh">16</text>
<rect x="457.9" y="469.4" width="12.5" height="11" rx="5" fill="#fff" stroke="#5a5a5a" stroke-width="1"/><text x="464.2" y="477.5" class="sh">16</text>
<rect x="508.5" y="455.6" width="12.5" height="11" rx="5" fill="#fff" stroke="#5a5a5a" stroke-width="1"/><text x="514.8" y="463.7" class="sh">71</text>
<path d="M583.9 438.9 Q587.3 437.9 591.4 439.1 Q595.5 437.9 598.9 438.9 L599.2 440.7 L599.2 444.3 Q599.2 448.5 591.4 449.7 Q583.5 448.5 583.5 444.3 L583.5 440.7 Z" fill="#fff" stroke="#5a5a5a" stroke-width="1"/><text x="591.4" y="446.3" class="sh">281</text>
<path d="M434.4 589.4 Q437.7 588.4 441.8 589.6 Q445.9 588.4 449.2 589.4 L449.7 591.2 L449.7 594.8 Q449.7 599.0 441.8 600.2 Q433.9 599.0 433.9 594.8 L433.9 591.2 Z" fill="#fff" stroke="#5a5a5a" stroke-width="1"/><text x="441.8" y="596.8" class="sh">290</text>
<path d="M406.9 604.9 Q409.5 603.9 412.9 605.1 Q416.3 603.9 418.8 604.9 L419.2 606.7 L419.2 610.3 Q419.2 614.5 412.9 615.7 Q406.5 614.5 406.5 610.3 L406.5 606.7 Z" fill="#fff" stroke="#5a5a5a" stroke-width="1"/><text x="412.9" y="612.3" class="sh">87</text>
<path d="M549.4 592.1 Q552.8 591.1 556.9 592.3 Q561.0 591.1 564.4 592.1 L564.8 593.9 L564.8 597.5 Q564.8 601.7 556.9 602.9 Q549.0 601.7 549.0 597.5 L549.0 593.9 Z" fill="#fff" stroke="#5a5a5a" stroke-width="1"/><text x="556.9" y="599.5" class="sh">290</text>
<path d="M545.8 612.4 Q549.1 611.4 553.2 612.6 Q557.3 611.4 560.7 612.4 L561.1 614.2 L561.1 617.8 Q561.1 622.0 553.2 623.2 Q545.4 622.0 545.4 617.8 L545.4 614.2 Z" fill="#fff" stroke="#5a5a5a" stroke-width="1"/><text x="553.2" y="619.8" class="sh">281</text>
<rect x="632.5" y="529.5" width="12.5" height="11" rx="5" fill="#fff" stroke="#5a5a5a" stroke-width="1"/><text x="638.8" y="537.6" class="sh">71</text>
<path d="M748.0 472.0 Q753.8 470.5 759.5 472.0 L759.5 478.1 Q759.5 482.5 753.8 484.0 Q748.0 482.5 748.0 478.1 Z" fill="#2f67b9" stroke="#fff" stroke-width="0.8"/><rect x="748.8" y="471.4" width="9.9" height="2.4" fill="#e0413d"/><text x="753.8" y="481.1" class="shi">35</text>
<rect x="775.4" y="469.7" width="15.5" height="11" rx="5" fill="#fff" stroke="#5a5a5a" stroke-width="1"/><text x="783.1" y="477.8" class="sh">130</text>
<path d="M721.4 517.8 Q724.8 516.8 728.9 518.0 Q733.0 516.8 736.4 517.8 L736.8 519.6 L736.8 523.2 Q736.8 527.4 728.9 528.6 Q721.0 527.4 721.0 523.2 L721.0 519.6 Z" fill="#fff" stroke="#5a5a5a" stroke-width="1"/><text x="728.9" y="525.2" class="sh">183</text>
<path d="M739.5 545.7 Q742.9 544.7 747.0 545.9 Q751.1 544.7 754.5 545.7 L754.9 547.5 L754.9 551.1 Q754.9 555.3 747.0 556.5 Q739.1 555.3 739.1 551.1 L739.1 547.5 Z" fill="#fff" stroke="#5a5a5a" stroke-width="1"/><text x="747.0" y="553.1" class="sh">183</text>
<rect x="837.0" y="525.6" width="12.5" height="11" rx="5" fill="#fff" stroke="#5a5a5a" stroke-width="1"/><text x="843.3" y="533.7" class="sh">95</text>
<path d="M802.9 547.7 Q806.3 546.7 810.4 547.9 Q814.5 546.7 817.9 547.7 L818.2 549.5 L818.2 553.1 Q818.2 557.3 810.4 558.5 Q802.5 557.3 802.5 553.1 L802.5 549.5 Z" fill="#fff" stroke="#5a5a5a" stroke-width="1"/><text x="810.4" y="555.1" class="sh">290</text>
<path d="M674.8 586.8 Q678.1 585.8 682.2 587.0 Q686.3 585.8 689.7 586.8 L690.1 588.6 L690.1 592.2 Q690.1 596.4 682.2 597.6 Q674.4 596.4 674.4 592.2 L674.4 588.6 Z" fill="#fff" stroke="#5a5a5a" stroke-width="1"/><text x="682.2" y="594.2" class="sh">290</text>
<rect x="701.5" y="591.4" width="12.5" height="11" rx="5" fill="#fff" stroke="#5a5a5a" stroke-width="1"/><text x="707.8" y="599.5" class="sh">1</text>
<rect x="758.2" y="606.8" width="15.5" height="11" rx="5" fill="#fff" stroke="#5a5a5a" stroke-width="1"/><text x="766.0" y="614.9" class="sh">130</text>
<rect x="810.0" y="615.0" width="12.5" height="11" rx="5" fill="#fff" stroke="#5a5a5a" stroke-width="1"/><text x="816.3" y="623.1" class="sh">71</text>
<path d="M947.4 504.0 Q950.0 503.0 953.4 504.2 Q956.8 503.0 959.4 504.0 L959.8 505.8 L959.8 509.4 Q959.8 513.6 953.4 514.8 Q947.0 513.6 947.0 509.4 L947.0 505.8 Z" fill="#fff" stroke="#5a5a5a" stroke-width="1"/><text x="953.4" y="511.4" class="sh">77</text>
<rect x="1007.0" y="455.6" width="12.5" height="11" rx="5" fill="#fff" stroke="#5a5a5a" stroke-width="1"/><text x="1013.2" y="463.7" class="sh">36</text>
<rect x="1052.3" y="467.1" width="12.5" height="11" rx="5" fill="#fff" stroke="#5a5a5a" stroke-width="1"/><text x="1058.6" y="475.2" class="sh">21</text>
<rect x="950.5" y="578.2" width="12.5" height="11" rx="5" fill="#fff" stroke="#5a5a5a" stroke-width="1"/><text x="956.7" y="586.3" class="sh">21</text>
<path d="M907.5 593.4 Q910.9 592.4 915.0 593.6 Q919.1 592.4 922.5 593.4 L922.9 595.2 L922.9 598.8 Q922.9 603.0 915.0 604.2 Q907.1 603.0 907.1 598.8 L907.1 595.2 Z" fill="#fff" stroke="#5a5a5a" stroke-width="1"/><text x="915.0" y="600.8" class="sh">290</text>
<path d="M1015.6 615.7 Q1019.0 614.7 1023.1 615.9 Q1027.2 614.7 1030.5 615.7 L1030.9 617.5 L1030.9 621.1 Q1030.9 625.3 1023.1 626.5 Q1015.2 625.3 1015.2 621.1 L1015.2 617.5 Z" fill="#fff" stroke="#5a5a5a" stroke-width="1"/><text x="1023.1" y="623.1" class="sh">290</text>
<rect x="1180.5" y="501.6" width="12.5" height="11" rx="5" fill="#fff" stroke="#5a5a5a" stroke-width="1"/><text x="1186.8" y="509.7" class="sh">6</text>
<rect x="1236.5" y="488.5" width="12.5" height="11" rx="5" fill="#fff" stroke="#5a5a5a" stroke-width="1"/><text x="1242.7" y="496.6" class="sh">90</text>
<rect x="1256.2" y="463.8" width="12.5" height="11" rx="5" fill="#fff" stroke="#5a5a5a" stroke-width="1"/><text x="1262.4" y="471.9" class="sh">30</text>
<rect x="1160.3" y="573.0" width="15.5" height="11" rx="5" fill="#fff" stroke="#5a5a5a" stroke-width="1"/><text x="1168.1" y="581.1" class="sh">105</text>
<rect x="1213.5" y="608.5" width="12.5" height="11" rx="5" fill="#fff" stroke="#5a5a5a" stroke-width="1"/><text x="1219.7" y="616.6" class="sh">6</text>
<text class="lb" x="213.5" y="447.1">London</text>
<text class="lb" x="208.3" y="476.7">Yates</text>
<text class="lb" x="157.7" y="509.9">Junction</text>
<text class="lb" x="93.0" y="509.7">elt</text>
<text class="lb" x="186.3" y="532.9">Segovia</text>
<text class="lb" x="341.0" y="524.4">Doss</text>
<text class="lb" x="308.9" y="573.0">Harper</text>
<text class="lb" x="348.5" y="588.9">Tivydale</text>
<text class="lb" x="272.0" y="611.1">Mountain</text>
<text class="lb" x="272.0" y="620.6">Home</text>
<text class="lb" x="346.9" y="427.9">Art</text>
<text class="lb" x="391.5" y="439.2">Castell</text>
<text class="lb" x="539.4" y="453.6">Kingsland</text>
<text class="lb" x="586.4" y="479.9">Marble Falls</text>
<text class="lb" x="559.2" y="491.4">Horseshoe Bay</text>
<text class="lb" x="620.0" y="513.8">Spicewood</text>
<text class="lb" x="415.5" y="580.5">Fredericksburg</text>
<text class="lb" x="475.3" y="593.7">Stonewall</text>
<text class="lb" x="547.7" y="580.5">Johnson City</text>
<text class="lb" x="640.4" y="604.2">Dripping</text>
<text class="lb" x="640.4" y="613.4">Springs</text>
<text class="lb" x="649.3" y="425.9">Bertram</text>
<text class="lb" x="687.1" y="450.7">Liberty Hill</text>
<text class="lb" x="757.8" y="461.9">Georgetown</text>
<text class="lb" x="834.0" y="482.6">Taylor</text>
<text class="lb" x="795.6" y="491.8">Hutto</text>
<text class="lb" x="757.1" y="503.3">Round Rock</text>
<text class="lb" x="773.2" y="521.0">Pflugerville</text>
<text class="lb" x="667.4" y="550.0">Lakeway</text>
<text class="lb" x="845.9" y="556.5">Elgin</text>
<text class="lb" x="766.7" y="602.6">Del Valle</text>
<text class="lb" x="991.2" y="436.5">Milano</text>
<text class="lb" x="951.8" y="454.6">Rockdale</text>
<text class="lb" x="893.3" y="467.8">Thorndale</text>
<text class="lb" x="1039.9" y="495.7">Caldwell</text>
<text class="lb" x="948.5" y="532.9">Lexington</text>
<text class="lb" x="1002.7" y="553.9">Dime Box</text>
<text class="lb" x="1083.0" y="557.5">Somerville</text>
<text class="lb" x="970.5" y="611.4">Giddings</text>
<text class="lb" x="1068.5" y="611.8">Burton</text>
<text class="lb" x="1132.6" y="448.1">Bryan</text>
<text class="lb" x="1105.6" y="509.9">Snook</text>
<text class="lb" x="1241.1" y="510.5">Anderson</text>
<text class="lb" x="1283.8" y="493.1">Richards</text>
<text class="lb" x="1213.1" y="543.4">Navasota</text>
<text class="lb" x="1306.8" y="543.4">Mon</text>
<text class="lb" x="1262.4" y="561.4">Plant</text>
<text class="lb" x="1267.4" y="585.4">Tod</text>
<text class="lb" x="1125.4" y="616.7">Brenham</text>
<text x="1142.5" y="463.6" font-family="Liberation Sans" font-size="10.2" fill="#555" text-anchor="middle" paint-order="stroke" stroke="#fff" stroke-width="2" stroke-linejoin="round">College Station</text>
<text x="738.7" y="584.3" font-family="Liberation Sans" font-size="11.6" font-weight="700" fill="#3c3c3c" text-anchor="middle" paint-order="stroke" stroke="#fff" stroke-width="2" stroke-linejoin="round">Austin</text>
<g fill="#ff9c2a" fill-opacity="0.62" stroke="#ff8c00" stroke-width="1.7">
<circle cx="682.7" cy="462.9" r="6"/>
<circle cx="670.4" cy="470.9" r="6"/>
<circle cx="678.4" cy="470.9" r="6"/>
<circle cx="702.3" cy="458.7" r="6"/>
<circle cx="710.8" cy="463.4" r="6"/>
<circle cx="694.6" cy="462.9" r="6"/>
<circle cx="727.9" cy="477.4" r="6"/>
<circle cx="678.4" cy="481.7" r="6"/>
<circle cx="686.1" cy="477.4" r="6"/>
<circle cx="721.9" cy="488.5" r="6"/>
<circle cx="676.7" cy="496.2" r="6"/>
<circle cx="692" cy="496.2" r="6"/>
<circle cx="691.2" cy="505.6" r="6"/>
<circle cx="669" cy="511.6" r="6"/>
<circle cx="670.7" cy="517.5" r="6"/>
<circle cx="666.5" cy="523.5" r="6"/>
<circle cx="664.7" cy="539.7" r="6"/>
<circle cx="708.3" cy="492.8" r="6"/>
<circle cx="692.9" cy="499.6" r="6"/>
<circle cx="720" cy="593.2" r="6"/>
<circle cx="743" cy="584.4" r="6"/>
</g>
<g fill="#ff8c00">
<circle cx="656.2" cy="528.6" r="6.3"/>
<circle cx="692" cy="473" r="6.3"/>
<circle cx="697" cy="466" r="6.3"/>
<circle cx="689" cy="482" r="6.3"/>
<circle cx="713" cy="472" r="6.3"/>
<circle cx="723" cy="487" r="6.3"/>
<circle cx="696" cy="472" r="6.3"/>
<circle cx="702" cy="469.5" r="6.3"/>
<circle cx="708" cy="474" r="6.3"/>
<circle cx="700" cy="478" r="6.3"/>
<circle cx="706" cy="481" r="6.3"/>
<circle cx="712" cy="479" r="6.3"/>
<circle cx="718" cy="484" r="6.3"/>
<circle cx="696" cy="484" r="6.3"/>
<circle cx="702" cy="488" r="6.3"/>
<circle cx="708" cy="490" r="6.3"/>
<circle cx="714" cy="488" r="6.3"/>
<circle cx="721" cy="490" r="6.3"/>
<circle cx="704" cy="493" r="6.3"/>
<circle cx="695" cy="489" r="6.3"/>
<circle cx="690" cy="478" r="6.3"/>
<circle cx="710" cy="485" r="6.3"/>
</g>
<g font-family="Liberation Sans" font-size="14.5" font-weight="400" stroke-width="0.5" paint-order="stroke"><text x="91" y="624" fill="#4285f4" stroke="#4285f4">G</text><text x="102.3" y="624" fill="#ea4335" stroke="#ea4335">o</text><text x="110.8" y="624" fill="#fbbc05" stroke="#fbbc05">o</text><text x="119.3" y="624" fill="#4285f4" stroke="#4285f4">g</text><text x="127.8" y="624" fill="#34a853" stroke="#34a853">l</text><text x="131.5" y="624" fill="#ea4335" stroke="#ea4335">e</text></g>
<rect x="1057" y="619" width="257" height="11" fill="#f5f5f5" fill-opacity="0.8"/>
<g font-family="Liberation Sans" font-size="7.8" fill="#444"><text x="1061" y="627.5" textLength="67">Keyboard shortcuts</text><text x="1139" y="627.5" textLength="112.5">Map data ©2022 Google, INEGI</text><text x="1261.5" y="627.5" textLength="47.5">Terms of Use</text></g>
<rect x="1274.1" y="490.7" width="32.6" height="32.4" rx="2.5" fill="#000" fill-opacity="0.08"/>
<rect x="1274.6" y="490.7" width="31.6" height="31.2" rx="2" fill="#fff"/>
<g fill="#f9b21c" stroke="#c78a00" stroke-width="0.5"><circle cx="1290.4" cy="499" r="3"/><path d="M1286 503.5 Q1290.4 501.5 1294.8 503.5 L1295.5 511 L1293 511 L1292.5 517 L1288.3 517 L1287.8 511 L1285.3 511 Z"/></g>
<rect x="1274.1" y="547.5" width="32.6" height="65" rx="2.5" fill="#000" fill-opacity="0.08"/>
<rect x="1274.6" y="547.5" width="31.6" height="63.8" rx="2" fill="#fff"/>
<rect x="1280" y="579.1" width="21" height="0.8" fill="#e6e6e6"/>
<g fill="#666"><rect x="1284.4" y="562.2" width="12" height="2.2"/><rect x="1289.3" y="557.3" width="2.2" height="12"/><rect x="1284.4" y="594.2" width="12" height="2.2"/></g>
</svg>
</div>

<div class="abs" style="left:17px;top:642px;width:4px;height:3px;background:#7d86a0;clip-path:polygon(0 0,100% 100%,0 100%)"></div>
</body></html>
